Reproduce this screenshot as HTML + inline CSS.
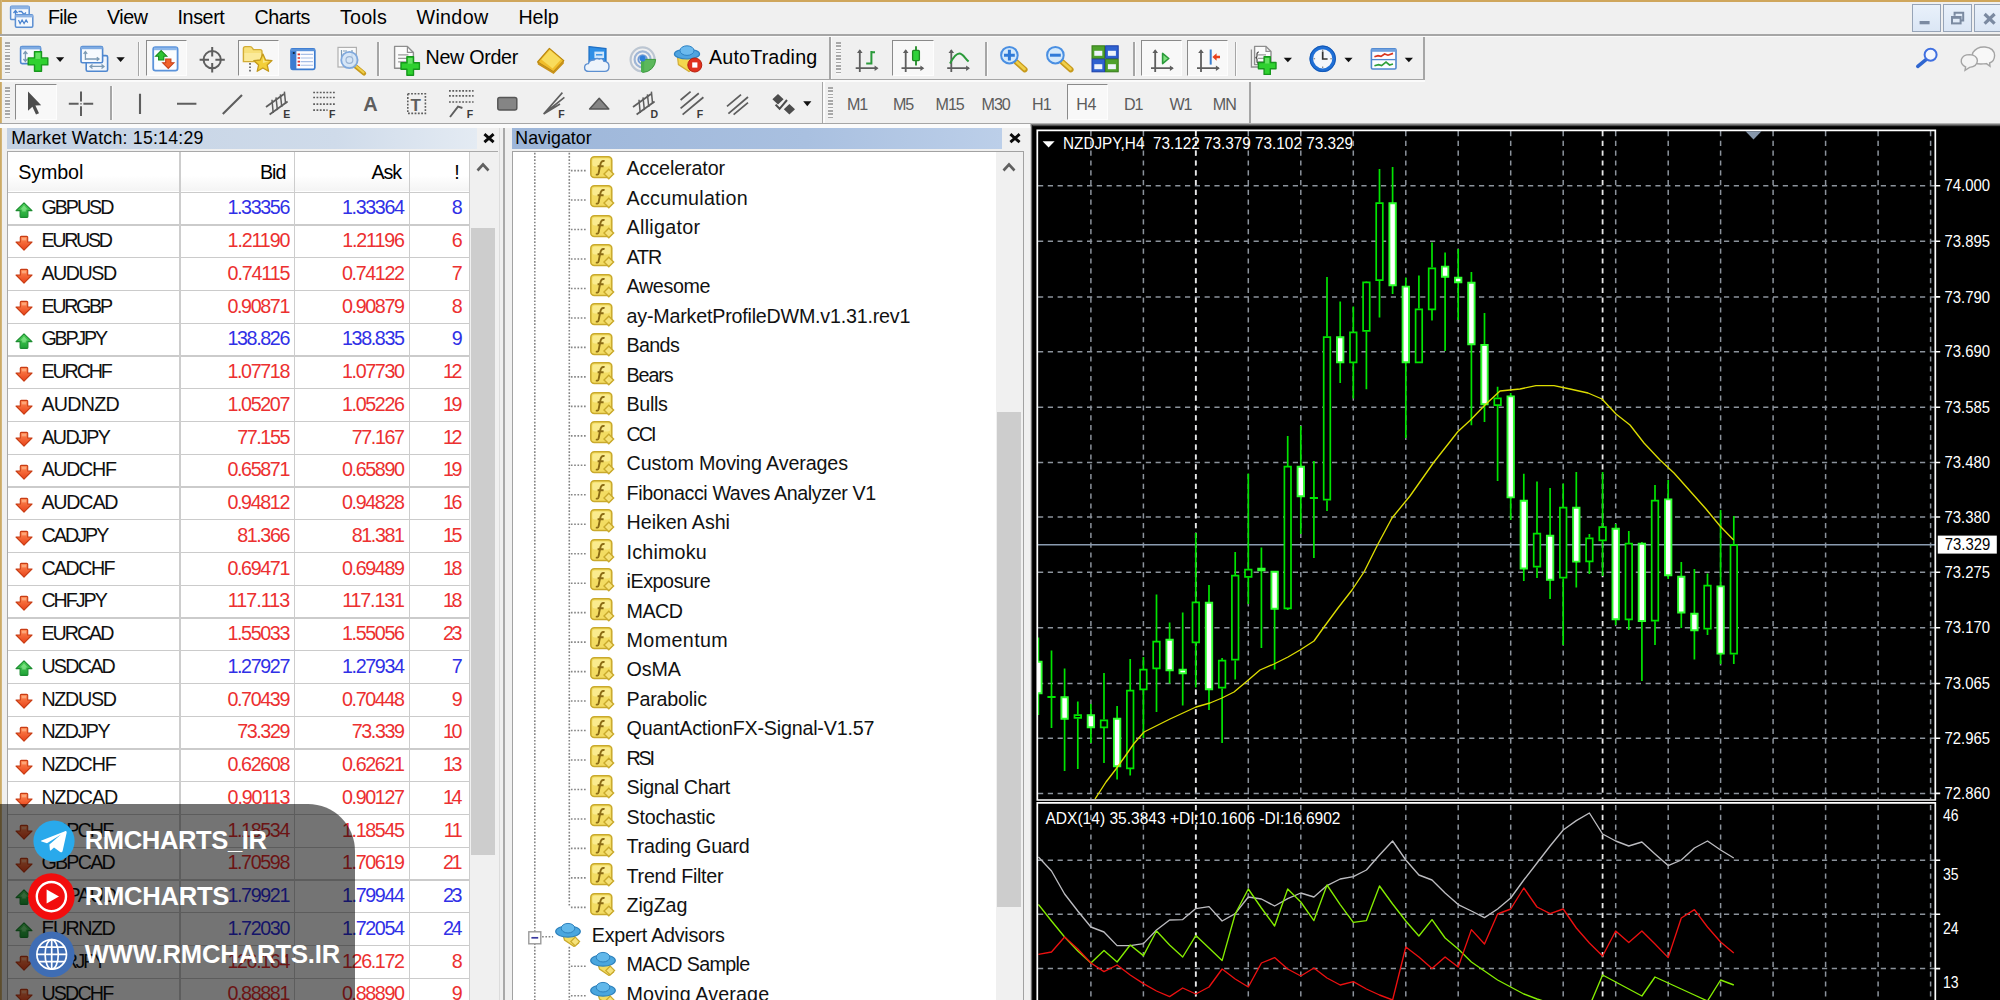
<!DOCTYPE html><html><head><meta charset="utf-8"><title>MetaTrader</title><style>
html,body{margin:0;padding:0}
body{width:2000px;height:1000px;overflow:hidden;position:relative;background:#f0f0f0;font-family:"Liberation Sans",sans-serif}
.t{position:absolute;white-space:pre;display:block}
.a{position:absolute}

.ln{position:absolute;background:#a6a6a6}
.wl{position:absolute;background:#fbfbfb}
.pb{position:absolute;background:#f8f8f8;border-top:1.5px solid #8a8a8a;border-left:1.5px solid #8a8a8a;border-right:1.5px solid #fdfdfd;border-bottom:1.5px solid #fdfdfd;box-sizing:border-box}
.grip{position:absolute;width:5px;background:repeating-linear-gradient(to bottom,#a8a8a8 0,#a8a8a8 1.6px,#f6f6f6 1.6px,#f6f6f6 3.28px)}
.mw{position:absolute;left:7px;top:151px;width:491px;height:860px;background:#fff;border:1px solid #a9a9a9;box-sizing:border-box}
.hl{position:absolute;left:0;height:1.3px;background:#cbcbcb}
.vl{position:absolute;width:1.3px;background:#cdcdcd}
</style></head><body>
<div class="a" style="left:0px;top:0px;width:2000px;height:1.8px;background:#cfa65c"></div>
<div class="a" style="left:0px;top:0px;width:1.7px;height:1000px;background:linear-gradient(to right,#c9a55c,#d6bb84)"></div>
<div class="ln" style="left:0px;top:34.4px;width:2000px;height:1.4px;"></div>
<div class="wl" style="left:0px;top:35.8px;width:2000px;height:1.6px;"></div>
<span class="t" style="left:48px;top:4.27px;font-size:19.7px;line-height:26px;color:#000;letter-spacing:-0.69px;">File</span>
<span class="t" style="left:107px;top:4.27px;font-size:19.7px;line-height:26px;color:#000;letter-spacing:-0.46px;">View</span>
<span class="t" style="left:177.5px;top:4.27px;font-size:19.7px;line-height:26px;color:#000;letter-spacing:-0.38px;">Insert</span>
<span class="t" style="left:254.5px;top:4.27px;font-size:19.7px;line-height:26px;color:#000;letter-spacing:-0.42px;">Charts</span>
<span class="t" style="left:340px;top:4.27px;font-size:19.7px;line-height:26px;color:#000;letter-spacing:0.2px;">Tools</span>
<span class="t" style="left:416.5px;top:4.27px;font-size:19.7px;line-height:26px;color:#000;letter-spacing:0.32px;">Window</span>
<span class="t" style="left:518.5px;top:4.27px;font-size:19.7px;line-height:26px;color:#000;letter-spacing:-0.13px;">Help</span>

<div class="a" style="left:1912px;top:4px;width:28.5px;height:28px;background:linear-gradient(#e9f1fb,#dbe6f5);border:1.4px solid #97a4b7;box-sizing:border-box"></div>
<div class="a" style="left:1943px;top:4px;width:29px;height:28px;background:linear-gradient(#e9f1fb,#dbe6f5);border:1.4px solid #97a4b7;box-sizing:border-box"></div>
<div class="a" style="left:1974.3px;top:4px;width:27px;height:28px;background:linear-gradient(#e9f1fb,#dbe6f5);border:1.4px solid #97a4b7;box-sizing:border-box"></div>

<div class="ln" style="left:0px;top:79px;width:1424.5px;height:1.3px;"></div>
<div class="wl" style="left:0px;top:80.3px;width:1424.5px;height:1.7px;"></div>
<div class="ln" style="left:1423.3px;top:37px;width:1.5px;height:43px;"></div>
<div class="ln" style="left:829.3px;top:37px;width:1.5px;height:42px;"></div>
<div class="wl" style="left:830.8px;top:37px;width:1.5px;height:42px;"></div>
<div class="grip" style="left:5.4px;top:42px;width:5px;height:33px;"></div>
<div class="grip" style="left:836px;top:42px;width:5px;height:33px;"></div>
<div class="ln" style="left:137.6px;top:41.5px;width:1.5px;height:34px;"></div>
<div class="wl" style="left:139.1px;top:41.5px;width:1.4px;height:34px;"></div>
<div class="ln" style="left:377.2px;top:41.5px;width:1.5px;height:34px;"></div>
<div class="wl" style="left:378.7px;top:41.5px;width:1.4px;height:34px;"></div>
<div class="ln" style="left:985.2px;top:41.5px;width:1.5px;height:34px;"></div>
<div class="wl" style="left:986.7px;top:41.5px;width:1.4px;height:34px;"></div>
<div class="ln" style="left:1133.2px;top:41.5px;width:1.5px;height:34px;"></div>
<div class="wl" style="left:1134.7px;top:41.5px;width:1.4px;height:34px;"></div>
<div class="ln" style="left:1234.6px;top:41.5px;width:1.5px;height:34px;"></div>
<div class="wl" style="left:1236.1px;top:41.5px;width:1.4px;height:34px;"></div>
<div class="pb" style="left:146px;top:40px;width:41px;height:35.5px;"></div>
<div class="pb" style="left:238.2px;top:40px;width:40.6px;height:35.5px;"></div>
<div class="pb" style="left:892px;top:40px;width:42px;height:35.5px;"></div>
<div class="pb" style="left:1141px;top:40px;width:41px;height:35.5px;"></div>
<div class="pb" style="left:1187.2px;top:40px;width:40.6px;height:35.5px;"></div>
<span class="t" style="left:425.5px;top:43.57px;font-size:19.7px;line-height:26px;color:#000;letter-spacing:-0.3px;">New Order</span>
<span class="t" style="left:709px;top:43.57px;font-size:19.7px;line-height:26px;color:#000;letter-spacing:0.17px;">AutoTrading</span>
<div class="ln" style="left:0px;top:122.8px;width:1030.5px;height:1.3px;"></div>
<div class="wl" style="left:0px;top:124.1px;width:1030.5px;height:3.6px;"></div>
<div class="a" style="left:1030.5px;top:122.6px;width:970px;height:1.6px;background:#bdbdbd"></div>
<div class="ln" style="left:1249px;top:82px;width:1.6px;height:41px;"></div>
<div class="ln" style="left:821.5px;top:82px;width:1.5px;height:41px;"></div>
<div class="wl" style="left:823px;top:82px;width:1.5px;height:41px;"></div>
<div class="grip" style="left:5.4px;top:87px;width:5px;height:31px;"></div>
<div class="grip" style="left:828px;top:87px;width:5px;height:31px;"></div>
<div class="ln" style="left:110px;top:85.5px;width:1.5px;height:34px;"></div>
<div class="wl" style="left:111.5px;top:85.5px;width:1.4px;height:34px;"></div>
<div class="pb" style="left:15px;top:84px;width:41.5px;height:35.5px;"></div>
<div class="pb" style="left:1067px;top:84px;width:41px;height:35.5px;"></div>
<span class="t" style="left:847px;top:93.52px;font-size:16.1px;line-height:21px;color:#5c5c5c;letter-spacing:-1.18px;">M1</span>
<span class="t" style="left:893px;top:93.52px;font-size:16.1px;line-height:21px;color:#5c5c5c;letter-spacing:-1.18px;">M5</span>
<span class="t" style="left:935.6px;top:93.52px;font-size:16.1px;line-height:21px;color:#5c5c5c;letter-spacing:-1.07px;">M15</span>
<span class="t" style="left:981.6px;top:93.52px;font-size:16.1px;line-height:21px;color:#5c5c5c;letter-spacing:-1.07px;">M30</span>
<span class="t" style="left:1032px;top:93.52px;font-size:16.1px;line-height:21px;color:#5c5c5c;letter-spacing:-0.99px;">H1</span>
<span class="t" style="left:1076.3px;top:93.52px;font-size:16.1px;line-height:21px;color:#5c5c5c;letter-spacing:-0.44px;">H4</span>
<span class="t" style="left:1124px;top:93.52px;font-size:16.1px;line-height:21px;color:#5c5c5c;letter-spacing:-1.04px;">D1</span>
<span class="t" style="left:1169.4px;top:93.52px;font-size:16.1px;line-height:21px;color:#5c5c5c;letter-spacing:-1.12px;">W1</span>
<span class="t" style="left:1212.7px;top:93.52px;font-size:16.1px;line-height:21px;color:#5c5c5c;letter-spacing:-0.82px;">MN</span>
<svg class="a" style="left:0;top:0" width="2000" height="125" viewBox="0 0 2000 125"><rect x="10.6" y="6.2" width="18.6" height="13.4" rx="1.2" fill="#f4f8fd" stroke="#5b8fd2" stroke-width="1.5"/><rect x="10.6" y="6.2" width="18.6" height="3" fill="#8fb4e4"/><path d="M13.5 13 l2 -2.5 l2 2.5 m-2 -2.5 v5 M18.5 11.5 h3 l2.5 3 l2 -2" stroke="#4a84d0" stroke-width="1.3" fill="none"/><rect x="15.4" y="14.8" width="17.4" height="12.4" rx="1.2" fill="#f4f8fd" stroke="#5b8fd2" stroke-width="1.5"/><rect x="15.4" y="14.8" width="17.4" height="2.6" fill="#8fb4e4"/><path d="M18.5 20 l1.6 3.6 l2 -3.6 l2 3.6 l2 -3.6 l1.6 2.6" stroke="#4a84d0" stroke-width="1.2" fill="none"/><rect x="1919.6" y="21" width="10" height="3.3" fill="#7b8aa1"/><path d="M1954.6 15.8 V12.7 H1963.2 V20.6 H1960.6" stroke="#7b8aa1" stroke-width="2" fill="none"/><rect x="1952" y="17" width="8.6" height="6.4" fill="none" stroke="#7b8aa1" stroke-width="2"/><rect x="1952" y="16.4" width="8.6" height="2.4" fill="#7b8aa1"/><path d="M1984.6 14 L1994.6 23.6 M1994.6 14 L1984.6 23.6" stroke="#7b8aa1" stroke-width="3.2" fill="none"/><rect x="20.6" y="46.6" width="20" height="17" rx="1.5" fill="#f7fafe" stroke="#4f87cf" stroke-width="1.6"/><rect x="20.6" y="46.6" width="20" height="2.8" fill="#7fabe2"/><path d="M25.4 52 V61 M23.4 54 L25.4 51.6 L27.4 54 M23.4 59 L25.4 61.4 L27.4 59" stroke="#7d9bb5" stroke-width="1.3" fill="none"/><path d="M34.5 51.6 H41.5 V57.9 H47.8 V64.9 H41.5 V71.2 H34.5 V64.9 H28.2 V57.9 H34.5 Z" fill="#2fd12f" stroke="#17971d" stroke-width="1.4" stroke-linejoin="round"/><path d="M35.5 52.8 H40.5 V58.9 H35.5 Z" fill="#8ef08a" opacity=".55"/><path d="M56 57.2 H64.2 L60.1 62 Z" fill="#111"/><rect x="86.2" y="55.6" width="21.4" height="15.6" rx="1.5" fill="#f2f6fc" stroke="#4f87cf" stroke-width="1.6"/><path d="M90 66.4 H104 M92.5 64.4 L90 66.4 L92.5 68.4 M101.5 64.4 L104 66.4 L101.5 68.4" stroke="#7d9bb5" stroke-width="1.3" fill="none"/><rect x="81" y="46.6" width="21.6" height="16.2" rx="1.5" fill="#f7fafe" stroke="#4f87cf" stroke-width="1.6"/><rect x="81" y="46.6" width="21.6" height="2.6" fill="#7fabe2"/><path d="M85.4 52 V60 M83.6 53.8 L85.4 51.6 L87.2 53.8 M86 59 H99 M96.8 57.2 L99 59 L96.8 60.8" stroke="#7d9bb5" stroke-width="1.3" fill="none"/><path d="M116.4 57.2 H124.8 L120.6 62 Z" fill="#111"/><rect x="153.2" y="47.2" width="24.4" height="23.4" rx="2.4" fill="#fbfdff" stroke="#5b93da" stroke-width="1.8"/><rect x="154" y="47.6" width="22.8" height="2.6" fill="#8db7ea"/><path d="M161.2 50.6 L166.8 56.2 H163.8 V60 H158.6 V56.2 H155.6 Z" fill="#2fc432" stroke="#188a1c" stroke-width="1.1"/><path d="M168.3 68.4 L173.9 62.8 H170.9 V59 H165.7 V62.8 H162.7 Z" fill="#f2642c" stroke="#c8421a" stroke-width="1.1"/><circle cx="212.2" cy="59.7" r="8.6" fill="none" stroke="#5e5e5e" stroke-width="2"/><path d="M212.2 47 V56.4 M212.2 63 V72.4 M199.6 59.7 H209 M215.4 59.7 H224.8" stroke="#5e5e5e" stroke-width="2" fill="none"/><path d="M243.4 61.6 V48.6 Q243.4 46.6 245.4 46.6 H250 Q251.6 46.6 252.4 48 L253.4 49.6 H260 Q262 49.6 262 51.6 V61.6 Z" fill="#f7e07a" stroke="#d2ac36" stroke-width="1.4"/><path d="M244.4 53 H261 V61 H244.4 Z" fill="#fbea9a"/><path d="M250 63 V72" stroke="#555" stroke-width="1.6" stroke-dasharray="1.7 1.7"/><path d="M262.9 54 L265.6 60 L272 60.6 L267.2 64.9 L268.6 71.3 L262.9 68 L257.2 71.3 L258.6 64.9 L253.8 60.6 L260.2 60 Z" fill="#f3cf38" stroke="#c49a1c" stroke-width="1.3" stroke-linejoin="round"/><path d="M262.9 57 L264.6 61 L268.6 61.4 L262.9 63 Z" fill="#fbee9a" opacity=".8"/><rect x="291" y="48.8" width="23.8" height="20.6" rx="1.6" fill="#fdfdff" stroke="#3b7bd0" stroke-width="1.7"/><rect x="291" y="48.8" width="5.4" height="20.6" fill="#3b7bd0"/><rect x="291" y="48.8" width="23.8" height="2.4" fill="#5b93da"/><path d="M300.6 54.4 H313 M300.6 58 H313 M300.6 61.6 H313 M300.6 65.2 H313" stroke="#a8bfe6" stroke-width="1.1"/><path d="M297.6 54.4 H300 M297.6 58 H300 M297.6 61.6 H300 M297.6 65.2 H300" stroke="#e0322c" stroke-width="1.7"/><circle cx="293.8" cy="53" r="1.1" fill="#123"/><rect x="338" y="47.4" width="18.4" height="19.6" fill="#fafafa" stroke="#b0b0b0" stroke-width="1.2"/><path d="M341.5 50 V58 M343 51 l4 0 M352 50 V57" stroke="#7d9bb5" stroke-width="1.2"/><path d="M355.4 66.2 L364 73.4" stroke="#c79a1c" stroke-width="4.4" stroke-linecap="round"/><path d="M355.8 66 L363.6 72.6" stroke="#f0cf4a" stroke-width="2" stroke-linecap="round"/><circle cx="349.4" cy="60" r="8.2" fill="#cfe2f6" fill-opacity=".85" stroke="#7fa8dc" stroke-width="1.8"/><circle cx="349.4" cy="60" r="3.4" fill="none" stroke="#9ab4d4" stroke-width="1.2"/><path d="M394.6 46.4 H407.4 L413.4 52.4 V68.2 H394.6 Z" fill="#fbfbfb" stroke="#8e8e8e" stroke-width="1.4" stroke-linejoin="round"/><path d="M407.4 46.4 V52.4 H413.4" fill="none" stroke="#8e8e8e" stroke-width="1.2"/><path d="M398.1 54.9 H408.4 M398.1 58.4 H408.4 M398.1 61.9 H406.4" stroke="#9a9a9a" stroke-width="1.4"/><path d="M406.9 56.8 H413.5 V62.7 H419.4 V69.3 H413.5 V75.2 H406.9 V69.3 H401 V62.7 H406.9 Z" fill="#2fd12f" stroke="#17971d" stroke-width="1.4" stroke-linejoin="round"/><path d="M407.9 58 H412.5 V63.7 H407.9 Z" fill="#8ef08a" opacity=".55"/><path d="M537.6 62 L549.4 48.4 L563.8 60.6 L553.4 71.8 Z" fill="#f0bd2a" stroke="#b8860e" stroke-width="1.2" stroke-linejoin="round"/><path d="M541.4 59.6 L549.8 50 L561 59.4 L552.6 68.4 Z" fill="#f8dc5c"/><path d="M537.6 62 L553.4 71.8 L563.8 60.6 L563.8 63.4 L553.6 74 L537.8 64.6 Z" fill="#c8921a"/><path d="M589 46.6 L606 48.6 V62 H589 Z" fill="#2f8fe6" stroke="#1f6fc4" stroke-width="1.2"/><rect x="594.4" y="51.6" width="9.6" height="6.4" fill="#cfe6fb"/><path d="M596 54.8 H602.4" stroke="#2f8fe6" stroke-width="1.4"/><path d="M589 71.4 Q584.6 71.4 584.6 67.4 Q584.6 64 588.4 63.6 Q589.6 59.6 594 60 Q596 57.6 599.4 59 Q602.6 57.6 604 61.4 Q609 61.6 609 66.4 Q609 71.4 604.6 71.4 Z" fill="#eef4fb" stroke="#5c8fd0" stroke-width="1.4"/><g fill="none"><circle cx="642.6" cy="59.4" r="12" stroke="#bcc6d2" stroke-width="2.2"/><circle cx="642.6" cy="59.4" r="8" stroke="#9fb6d6" stroke-width="2.2"/><circle cx="642.6" cy="59.4" r="4.2" stroke="#6f9ad6" stroke-width="2"/></g><path d="M642.6 59.4 L655.6 59.4 A13 13 0 0 1 642.6 72.4 Z" fill="#5cb85c" stroke="#3c9a3c" stroke-width="1"/><path d="M641 60 H644.2 V72 H641 Z" fill="#4caf50"/><circle cx="642.6" cy="58.6" r="3" fill="#2f7fd8"/><path d="M677.6 57.4 L694 57.4 L697.6 66 L689 71.6 L678.4 64.6 Z" fill="#f4d84e" stroke="#d2ac36" stroke-width="1.2"/><ellipse cx="687" cy="54" rx="12.6" ry="5" fill="#4fa4e0" stroke="#2f82c4" stroke-width="1.2"/><ellipse cx="687" cy="50.6" rx="7" ry="4.8" fill="#6cbaee" stroke="#2f82c4" stroke-width="1"/><circle cx="694.8" cy="65" r="7" fill="#e0301c" stroke="#b8200f" stroke-width="1"/><rect x="692.2" y="62.4" width="5.2" height="5.2" fill="#fff"/><path d="M859.8 50.5 V72 M855.7 68.2 H877.2" stroke="#5e5e5e" stroke-width="1.8" fill="none"/><path d="M857 53.1 L859.8 49.2 L862.6 53.1 Z M874.6 65.4 L878.5 68.2 L874.6 71 Z" fill="#5e5e5e"/><path d="M871.4 51 V64.6 M871.4 52.2 H875 M866.2 63.4 H871.4" stroke="#2a9a3a" stroke-width="2" fill="none"/><path d="M905.7 50.5 V72 M901.5 68.2 H923" stroke="#5e5e5e" stroke-width="1.8" fill="none"/><path d="M902.9 53.1 L905.7 49.2 L908.5 53.1 Z M920.4 65.4 L924.3 68.2 L920.4 71 Z" fill="#5e5e5e"/><path d="M916 46.2 V65.4" stroke="#1f8a24" stroke-width="1.8"/><rect x="912.6" y="50.4" width="6.8" height="10.2" rx="1" fill="#2fd23a" stroke="#1f8a24" stroke-width="1.3"/><path d="M951.3 50.5 V72 M947.2 68.2 H968.7" stroke="#5e5e5e" stroke-width="1.8" fill="none"/><path d="M948.5 53.1 L951.3 49.2 L954.1 53.1 Z M966.1 65.4 L970 68.2 L966.1 71 Z" fill="#5e5e5e"/><path d="M950 63.4 C953 58 956 53.6 959.4 53.6 C963 53.6 965 58.6 968.6 61.6" stroke="#2a9a3a" stroke-width="2" fill="none"/><path d="M1016.38 62.18 L1024.8 69.6" stroke="#c79a1c" stroke-width="5.6" stroke-linecap="round"/><path d="M1016.88 62.18 L1024.4 69" stroke="#f0cf4a" stroke-width="2.8" stroke-linecap="round"/><circle cx="1009.4" cy="55.2" r="8.3" fill="#d4e9fb" stroke="#4a8fe2" stroke-width="2"/><path d="M1004 55.2 H1014.8 M1009.4 49.8 V60.6" stroke="#2f7ad8" stroke-width="3" fill="none"/><path d="M1062.38 62.18 L1070.8 69.6" stroke="#c79a1c" stroke-width="5.6" stroke-linecap="round"/><path d="M1062.88 62.18 L1070.4 69" stroke="#f0cf4a" stroke-width="2.8" stroke-linecap="round"/><circle cx="1055.4" cy="55.2" r="8.3" fill="#d4e9fb" stroke="#4a8fe2" stroke-width="2"/><path d="M1050 55.2 H1060.8" stroke="#2f7ad8" stroke-width="3" fill="none"/><rect x="1092" y="45.8" width="12.6" height="12.6" fill="#4ea22c" stroke="#347a18" stroke-width="1"/><rect x="1094.3" y="50.8" width="8" height="5" fill="#eef4fb"/><rect x="1105.6" y="45.8" width="12.6" height="12.6" fill="#2f62d0" stroke="#1c3fa8" stroke-width="1"/><rect x="1107.9" y="50.8" width="8" height="5" fill="#eef4fb"/><rect x="1092" y="59.2" width="12.6" height="12.6" fill="#2f62d0" stroke="#1c3fa8" stroke-width="1"/><rect x="1094.3" y="64.2" width="8" height="5" fill="#eef4fb"/><rect x="1105.6" y="59.2" width="12.6" height="12.6" fill="#4ea22c" stroke="#347a18" stroke-width="1"/><rect x="1107.9" y="64.2" width="8" height="5" fill="#eef4fb"/><path d="M1155.2 50.5 V72 M1151 68.2 H1172.5" stroke="#5e5e5e" stroke-width="1.8" fill="none"/><path d="M1152.4 53.1 L1155.2 49.2 L1158 53.1 Z M1169.9 65.4 L1173.8 68.2 L1169.9 71 Z" fill="#5e5e5e"/><path d="M1162.6 53.4 V63.6 L1168.8 58.5 Z" fill="#7fe07f" stroke="#2a9a3a" stroke-width="1.6" stroke-linejoin="round"/><path d="M1201 50.5 V72 M1197 68.2 H1218.5" stroke="#5e5e5e" stroke-width="1.8" fill="none"/><path d="M1198.2 53.1 L1201 49.2 L1203.8 53.1 Z M1215.9 65.4 L1219.8 68.2 L1215.9 71 Z" fill="#5e5e5e"/><path d="M1210.7 49.5 V64.6" stroke="#3a7fd0" stroke-width="2"/><path d="M1212.4 57 L1216.6 53.2 V55.8 H1220 V58.2 H1216.6 V60.8 Z" fill="#e8401c"/><path d="M1254.6 46.4 H1266 L1271 51.4 V64.6 H1254.6 Z" fill="#fbfbfb" stroke="#8e8e8e" stroke-width="1.4" stroke-linejoin="round"/><path d="M1266 46.4 V51.4 H1271" fill="none" stroke="#8e8e8e" stroke-width="1.2"/><path d="M1258.1 54.9 H1266 M1258.1 58.4 H1266 M1258.1 61.9 H1264" stroke="#9a9a9a" stroke-width="1.4"/><path d="M1251.4 49.6 V67 H1264" fill="none" stroke="#8e8e8e" stroke-width="1.3"/><path d="M1259 52 q-2 0 -2 2 v2 q0 1.6 -1.6 1.6 q1.6 0 1.6 1.6 v2 q0 2 2 2" stroke="#444" stroke-width="1.2" fill="none"/><path d="M1264.1 56.8 H1270.3 V62.5 H1276 V68.7 H1270.3 V74.4 H1264.1 V68.7 H1258.4 V62.5 H1264.1 Z" fill="#2fd12f" stroke="#17971d" stroke-width="1.4" stroke-linejoin="round"/><path d="M1265.1 58 H1269.3 V63.5 H1265.1 Z" fill="#8ef08a" opacity=".55"/><path d="M1283.7 57.7 H1292 L1287.85 62.2 Z" fill="#111"/><circle cx="1322.7" cy="58.8" r="11.4" fill="#f4f6fa" stroke="#1f6fd6" stroke-width="3.6"/><circle cx="1322.7" cy="58.8" r="12.8" fill="none" stroke="#0f4fa8" stroke-width=".8"/><path d="M1322.7 51.4 V59 H1327.6" stroke="#333" stroke-width="1.7" fill="none"/><path d="M1322.7 49.6 v1.6 M1322.7 66.4 v1.6 M1313.5 58.8 h1.6 M1330.3 58.8 h1.6" stroke="#777" stroke-width="1.1"/><path d="M1344.4 57.7 H1352.6 L1348.5 62.2 Z" fill="#111"/><rect x="1371.4" y="48.8" width="24.6" height="20.2" rx="1.2" fill="#fdfdff" stroke="#4f87cf" stroke-width="1.6"/><rect x="1371.4" y="48.8" width="24.6" height="3" fill="#6fa0de"/><path d="M1372 59.6 H1395.6" stroke="#4f87cf" stroke-width="1.3"/><path d="M1374.4 56.8 L1378 55.6 L1381 56.4 L1384.6 54 L1388 55.2 L1393 53.4" stroke="#d8341c" stroke-width="1.7" fill="none"/><path d="M1374.4 65.8 L1378.6 64.6 L1381.6 65.6 L1386 62 L1389.6 65 L1393 64" stroke="#2fa03a" stroke-width="1.7" fill="none"/><path d="M1404.7 57.7 H1413 L1408.85 62.2 Z" fill="#111"/><path d="M1926 59.6 L1917.8 66.4" stroke="#2f66d0" stroke-width="3.6" stroke-linecap="round"/><circle cx="1930.6" cy="54.8" r="6" fill="#f4f7fd" stroke="#3f6fe0" stroke-width="2"/><path d="M1974.6 63.2 Q1970 59 1973 52.4 Q1977 46.4 1985 47 Q1994.4 48 1994.6 55.6 Q1994.4 61.6 1989.6 63 L1990 66.2 L1986.4 63.6 Q1979 64.6 1974.6 63.2 Z" fill="#f8f8f8" stroke="#a4a4a4" stroke-width="1.4"/><path d="M1965.6 67 Q1960.4 64.6 1961.4 59.4 Q1963 54.6 1969.6 54.6 Q1977 55 1977.4 60.6 Q1977.2 66.6 1969.6 67.4 L1965 70.4 Z" fill="#f4f4f4" stroke="#a4a4a4" stroke-width="1.4"/><path d="M28 91.6 V110.8 L32.4 106.8 L36 114.6 L39 113.2 L35.4 105.6 L41.2 105.2 Z" fill="#4c4c4c"/><path d="M81 91.6 V101.4 M81 106.2 V116 M68.8 103.8 H78.6 M83.4 103.8 H93.2" stroke="#5e5e5e" stroke-width="2" fill="none"/><rect x="80.3" y="103.1" width="1.4" height="1.4" fill="#5e5e5e"/><path d="M140 93.7 V114 M177 103.8 H196.4 M222.8 114 L242 95" stroke="#5e5e5e" stroke-width="2.1" fill="none"/><path d="M266 107 L284 94 M269.6 114.4 L287.6 101.4" stroke="#5e5e5e" stroke-width="1.8" fill="none"/><path d="M272 99.8 L273.2 113 M276 97.4 L277.4 110.2 M280.4 94.4 L281.8 107 M284.4 91.6 L285.6 103.6" stroke="#5e5e5e" stroke-width="1.5"/><text x="283.2" y="117.6" font-family="'Liberation Sans',sans-serif" font-weight="bold" font-size="10.5" fill="#3a3a3a">E</text><path d="M313.2 92.5 H335 M313.2 97.5 H335 M313.2 104.2 H335 M313.2 110.2 H327.6" stroke="#5e5e5e" stroke-width="1.7" stroke-dasharray="1.8 1.5"/><text x="329" y="117.6" font-family="'Liberation Sans',sans-serif" font-weight="bold" font-size="10.5" fill="#3a3a3a">F</text><text x="363.2" y="111" font-family="'Liberation Sans',sans-serif" font-weight="bold" font-size="20" fill="#5e5e5e">A</text><rect x="407.8" y="93.8" width="17.6" height="19.6" fill="none" stroke="#5e5e5e" stroke-width="1.6" stroke-dasharray="1.8 1.5"/><text x="410.4" y="111" font-family="'Liberation Sans',sans-serif" font-weight="bold" font-size="17" fill="#5e5e5e">T</text><path d="M449 90.8 H473.6 M449 95.8 H473.6 M449 102 H473.6" stroke="#5e5e5e" stroke-width="1.7" stroke-dasharray="1.8 1.5"/><path d="M450 117 L458 106.6 L462.4 108" stroke="#5e5e5e" stroke-width="1.9" fill="none"/><text x="466.8" y="117.6" font-family="'Liberation Sans',sans-serif" font-weight="bold" font-size="10.5" fill="#3a3a3a">F</text><rect x="497.8" y="97.4" width="19" height="12.6" rx="2" fill="#858585" stroke="#565656" stroke-width="1.5"/><path d="M543.6 114 L562.4 92.6 M543.6 114 L564.4 97.4 M543.6 114 L560 104" stroke="#5e5e5e" stroke-width="1.6" fill="none"/><text x="558.2" y="117.6" font-family="'Liberation Sans',sans-serif" font-weight="bold" font-size="10.5" fill="#3a3a3a">F</text><path d="M589.6 109 L599.2 98.2 L608.8 109 Z" fill="#858585" stroke="#565656" stroke-width="1.5" stroke-linejoin="round"/><path d="M633 107 L651 94 M636.6 114.4 L654.6 101.4" stroke="#5e5e5e" stroke-width="1.8" fill="none"/><path d="M639 99.8 L640.2 113 M643 97.4 L644.4 110.2 M647.4 94.4 L648.8 107 M651.4 91.6 L652.6 103.6" stroke="#5e5e5e" stroke-width="1.5"/><text x="650.4" y="117.6" font-family="'Liberation Sans',sans-serif" font-weight="bold" font-size="10.5" fill="#3a3a3a">D</text><path d="M680.6 100 L690.6 91.6 M680.6 108.4 L698.8 93.2 M682.6 114.6 L703.4 97.2" stroke="#5e5e5e" stroke-width="1.8" fill="none"/><text x="696.8" y="117.6" font-family="'Liberation Sans',sans-serif" font-weight="bold" font-size="10.5" fill="#3a3a3a">F</text><path d="M727 106.4 L741 94.6 M728.4 113.6 L748 97 M733.6 114.6 L748 102.6" stroke="#5e5e5e" stroke-width="1.8" fill="none"/><path d="M778 94 L783.6 99.2 L778 104.4 L772.4 99.2 Z M789.4 104 L795 109.2 L789.4 114.4 L783.8 109.2 Z" fill="#4c4c4c"/><path d="M775.6 104.6 L779.6 108.8 L787 100" stroke="#4c4c4c" stroke-width="2" fill="none"/><path d="M803.2 101.2 H811.4 L807.3 106.2 Z" fill="#111"/></svg>
<div class="a" style="left:6.8px;top:128px;width:470px;height:21px;background:linear-gradient(to right,#c3d1e3,#cfdbea 70%,#e4ebf3)"></div>
<span class="t" style="left:11.2px;top:126.97px;font-size:17.7px;line-height:23px;color:#000;letter-spacing:0.24px;">Market Watch: 15:14:29</span>
<svg class="a" style="left:482.6px;top:132.2px" width="12" height="12" viewBox="0 0 12 12"><path d="M1.4 2.2 L10.6 10.2 M10.6 2.2 L1.4 10.2" stroke="#0a0a0a" stroke-width="2.9" fill="none"/></svg>
<div class="a" style="left:503.4px;top:128px;width:1.5px;height:872px;background:#a9a9a9"></div>
<div class="a" style="left:498.8px;top:128px;width:1.3px;height:872px;background:#dcdcdc"></div>
<div class="mw"><div class="a" style="left:0px;top:0px;width:462px;height:39.4px;background:linear-gradient(#fff,#fff 60%,#f4f4f4)"></div><div class="a" style="left:462.3px;top:0px;width:27.5px;height:850px;background:#f0f0f0"></div><div class="a" style="left:463.2px;top:75.8px;width:24px;height:627px;background:#cdcdcd"></div><svg class="a" style="left:467.6px;top:10.2px" width="14" height="10" viewBox="0 0 14 10"><path d="M1.5 8.5 L7 2.5 L12.5 8.5" stroke="#606060" stroke-width="2.6" fill="none"/></svg><div class="hl" style="top:39.7px;width:462px"></div><div class="hl" style="top:72.45px;width:462px"></div><div class="hl" style="top:105.2px;width:462px"></div><div class="hl" style="top:137.95px;width:462px"></div><div class="hl" style="top:170.7px;width:462px"></div><div class="hl" style="top:203.45px;width:462px"></div><div class="hl" style="top:236.2px;width:462px"></div><div class="hl" style="top:268.95px;width:462px"></div><div class="hl" style="top:301.7px;width:462px"></div><div class="hl" style="top:334.45px;width:462px"></div><div class="hl" style="top:367.2px;width:462px"></div><div class="hl" style="top:399.95px;width:462px"></div><div class="hl" style="top:432.7px;width:462px"></div><div class="hl" style="top:465.45px;width:462px"></div><div class="hl" style="top:498.2px;width:462px"></div><div class="hl" style="top:530.95px;width:462px"></div><div class="hl" style="top:563.7px;width:462px"></div><div class="hl" style="top:596.45px;width:462px"></div><div class="hl" style="top:629.2px;width:462px"></div><div class="hl" style="top:661.95px;width:462px"></div><div class="hl" style="top:694.7px;width:462px"></div><div class="hl" style="top:727.45px;width:462px"></div><div class="hl" style="top:760.2px;width:462px"></div><div class="hl" style="top:792.95px;width:462px"></div><div class="hl" style="top:825.7px;width:462px"></div><div class="hl" style="top:858.45px;width:462px"></div><div class="hl" style="top:891.2px;width:462px"></div><div class="vl" style="left:171.3px;top:0px;height:850px"></div><div class="vl" style="left:285.8px;top:0px;height:850px"></div><div class="vl" style="left:400.8px;top:0px;height:850px"></div><div class="vl" style="left:461px;top:0px;height:850px"></div><span class="t" style="left:10.2px;top:6.77px;font-size:19.7px;line-height:26px;color:#000;letter-spacing:-0.11px;">Symbol</span><span class="t" style="left:251.91px;top:6.77px;font-size:19.7px;line-height:26px;color:#000;letter-spacing:-0.99px;">Bid</span><span class="t" style="left:363.39px;top:6.77px;font-size:19.7px;line-height:26px;color:#000;letter-spacing:-1.11px;">Ask</span><span class="t" style="left:446.3px;top:6.77px;font-size:19.7px;line-height:26px;color:#000;">!</span><span class="t" style="left:33.4px;top:42.27px;font-size:19.7px;line-height:26px;color:#111;letter-spacing:-2.02px;">GBPUSD</span><span class="t" style="left:219.38px;top:42.27px;font-size:19.7px;line-height:26px;color:#3030e6;letter-spacing:-1.36px;">1.33356</span><span class="t" style="left:333.98px;top:42.27px;font-size:19.7px;line-height:26px;color:#3030e6;letter-spacing:-1.36px;">1.33364</span><span class="t" style="left:443.64px;top:42.27px;font-size:19.7px;line-height:26px;color:#3030e6;">8</span><svg class="a" style="left:7.4px;top:49.5px" width="18" height="17" viewBox="0 0 18 17"><defs><linearGradient id="gu" x1="0" y1="0" x2="0" y2="1"><stop offset="0" stop-color="#52d45c"/><stop offset="1" stop-color="#1fa236"/></linearGradient></defs><path d="M9 0.8 L17 8.6 H12.9 V14.6 Q12.9 15.4 12.1 15.4 H5.9 Q5.1 15.4 5.1 14.6 V8.6 H1 Z" fill="url(#gu)" stroke="#1c8c30" stroke-width="1.1" stroke-linejoin="round"/><path d="M9 3.6 L12.6 7.4 H10.8 V9.6 H7.2 V7.4 H5.4 Z" fill="#9df09f" opacity=".6"/></svg><span class="t" style="left:33.4px;top:75.02px;font-size:19.7px;line-height:26px;color:#111;letter-spacing:-2.29px;">EURUSD</span><span class="t" style="left:219.59px;top:75.02px;font-size:19.7px;line-height:26px;color:#ec3030;letter-spacing:-1.15px;">1.21190</span><span class="t" style="left:334.19px;top:75.02px;font-size:19.7px;line-height:26px;color:#ec3030;letter-spacing:-1.15px;">1.21196</span><span class="t" style="left:443.64px;top:75.02px;font-size:19.7px;line-height:26px;color:#ec3030;">6</span><svg class="a" style="left:7.4px;top:82.85px" width="18" height="17" viewBox="0 0 18 17"><defs><linearGradient id="gd" x1="0" y1="0" x2="0" y2="1"><stop offset="0" stop-color="#ff8a52"/><stop offset="1" stop-color="#e8421a"/></linearGradient></defs><path d="M9 15.2 L17 7 H12.7 V2.4 Q12.7 1.4 11.7 1.4 H6.3 Q5.3 1.4 5.3 2.4 V7 H1 Z" fill="url(#gd)" stroke="#c83c14" stroke-width="1.1" stroke-linejoin="round"/><path d="M6.8 2.8 H11.2 V5.4 H6.8Z" fill="#ffc09a" opacity=".6"/></svg><span class="t" style="left:33.4px;top:107.77px;font-size:19.7px;line-height:26px;color:#111;letter-spacing:-1.47px;">AUDUSD</span><span class="t" style="left:219.59px;top:107.77px;font-size:19.7px;line-height:26px;color:#ec3030;letter-spacing:-1.15px;">0.74115</span><span class="t" style="left:333.98px;top:107.77px;font-size:19.7px;line-height:26px;color:#ec3030;letter-spacing:-1.36px;">0.74122</span><span class="t" style="left:443.64px;top:107.77px;font-size:19.7px;line-height:26px;color:#ec3030;">7</span><svg class="a" style="left:7.4px;top:115.6px" width="18" height="17" viewBox="0 0 18 17"><defs><linearGradient id="gd" x1="0" y1="0" x2="0" y2="1"><stop offset="0" stop-color="#ff8a52"/><stop offset="1" stop-color="#e8421a"/></linearGradient></defs><path d="M9 15.2 L17 7 H12.7 V2.4 Q12.7 1.4 11.7 1.4 H6.3 Q5.3 1.4 5.3 2.4 V7 H1 Z" fill="url(#gd)" stroke="#c83c14" stroke-width="1.1" stroke-linejoin="round"/><path d="M6.8 2.8 H11.2 V5.4 H6.8Z" fill="#ffc09a" opacity=".6"/></svg><span class="t" style="left:33.4px;top:140.52px;font-size:19.7px;line-height:26px;color:#111;letter-spacing:-2.3px;">EURGBP</span><span class="t" style="left:219.38px;top:140.52px;font-size:19.7px;line-height:26px;color:#ec3030;letter-spacing:-1.36px;">0.90871</span><span class="t" style="left:333.98px;top:140.52px;font-size:19.7px;line-height:26px;color:#ec3030;letter-spacing:-1.36px;">0.90879</span><span class="t" style="left:443.64px;top:140.52px;font-size:19.7px;line-height:26px;color:#ec3030;">8</span><svg class="a" style="left:7.4px;top:148.35px" width="18" height="17" viewBox="0 0 18 17"><defs><linearGradient id="gd" x1="0" y1="0" x2="0" y2="1"><stop offset="0" stop-color="#ff8a52"/><stop offset="1" stop-color="#e8421a"/></linearGradient></defs><path d="M9 15.2 L17 7 H12.7 V2.4 Q12.7 1.4 11.7 1.4 H6.3 Q5.3 1.4 5.3 2.4 V7 H1 Z" fill="url(#gd)" stroke="#c83c14" stroke-width="1.1" stroke-linejoin="round"/><path d="M6.8 2.8 H11.2 V5.4 H6.8Z" fill="#ffc09a" opacity=".6"/></svg><span class="t" style="left:33.4px;top:173.27px;font-size:19.7px;line-height:26px;color:#111;letter-spacing:-2.2px;">GBPJPY</span><span class="t" style="left:219.38px;top:173.27px;font-size:19.7px;line-height:26px;color:#3030e6;letter-spacing:-1.36px;">138.826</span><span class="t" style="left:333.98px;top:173.27px;font-size:19.7px;line-height:26px;color:#3030e6;letter-spacing:-1.36px;">138.835</span><span class="t" style="left:443.64px;top:173.27px;font-size:19.7px;line-height:26px;color:#3030e6;">9</span><svg class="a" style="left:7.4px;top:180.5px" width="18" height="17" viewBox="0 0 18 17"><defs><linearGradient id="gu" x1="0" y1="0" x2="0" y2="1"><stop offset="0" stop-color="#52d45c"/><stop offset="1" stop-color="#1fa236"/></linearGradient></defs><path d="M9 0.8 L17 8.6 H12.9 V14.6 Q12.9 15.4 12.1 15.4 H5.9 Q5.1 15.4 5.1 14.6 V8.6 H1 Z" fill="url(#gu)" stroke="#1c8c30" stroke-width="1.1" stroke-linejoin="round"/><path d="M9 3.6 L12.6 7.4 H10.8 V9.6 H7.2 V7.4 H5.4 Z" fill="#9df09f" opacity=".6"/></svg><span class="t" style="left:33.4px;top:206.02px;font-size:19.7px;line-height:26px;color:#111;letter-spacing:-2.11px;">EURCHF</span><span class="t" style="left:219.38px;top:206.02px;font-size:19.7px;line-height:26px;color:#ec3030;letter-spacing:-1.36px;">1.07718</span><span class="t" style="left:333.98px;top:206.02px;font-size:19.7px;line-height:26px;color:#ec3030;letter-spacing:-1.36px;">1.07730</span><span class="t" style="left:434.95px;top:206.02px;font-size:19.7px;line-height:26px;color:#ec3030;letter-spacing:-2.27px;">12</span><svg class="a" style="left:7.4px;top:213.85px" width="18" height="17" viewBox="0 0 18 17"><defs><linearGradient id="gd" x1="0" y1="0" x2="0" y2="1"><stop offset="0" stop-color="#ff8a52"/><stop offset="1" stop-color="#e8421a"/></linearGradient></defs><path d="M9 15.2 L17 7 H12.7 V2.4 Q12.7 1.4 11.7 1.4 H6.3 Q5.3 1.4 5.3 2.4 V7 H1 Z" fill="url(#gd)" stroke="#c83c14" stroke-width="1.1" stroke-linejoin="round"/><path d="M6.8 2.8 H11.2 V5.4 H6.8Z" fill="#ffc09a" opacity=".6"/></svg><span class="t" style="left:33.4px;top:238.77px;font-size:19.7px;line-height:26px;color:#111;letter-spacing:-0.74px;">AUDNZD</span><span class="t" style="left:219.38px;top:238.77px;font-size:19.7px;line-height:26px;color:#ec3030;letter-spacing:-1.36px;">1.05207</span><span class="t" style="left:333.98px;top:238.77px;font-size:19.7px;line-height:26px;color:#ec3030;letter-spacing:-1.36px;">1.05226</span><span class="t" style="left:434.95px;top:238.77px;font-size:19.7px;line-height:26px;color:#ec3030;letter-spacing:-2.27px;">19</span><svg class="a" style="left:7.4px;top:246.6px" width="18" height="17" viewBox="0 0 18 17"><defs><linearGradient id="gd" x1="0" y1="0" x2="0" y2="1"><stop offset="0" stop-color="#ff8a52"/><stop offset="1" stop-color="#e8421a"/></linearGradient></defs><path d="M9 15.2 L17 7 H12.7 V2.4 Q12.7 1.4 11.7 1.4 H6.3 Q5.3 1.4 5.3 2.4 V7 H1 Z" fill="url(#gd)" stroke="#c83c14" stroke-width="1.1" stroke-linejoin="round"/><path d="M6.8 2.8 H11.2 V5.4 H6.8Z" fill="#ffc09a" opacity=".6"/></svg><span class="t" style="left:33.4px;top:271.52px;font-size:19.7px;line-height:26px;color:#111;letter-spacing:-1.66px;">AUDJPY</span><span class="t" style="left:229.18px;top:271.52px;font-size:19.7px;line-height:26px;color:#ec3030;letter-spacing:-1.4px;">77.155</span><span class="t" style="left:343.78px;top:271.52px;font-size:19.7px;line-height:26px;color:#ec3030;letter-spacing:-1.4px;">77.167</span><span class="t" style="left:434.95px;top:271.52px;font-size:19.7px;line-height:26px;color:#ec3030;letter-spacing:-2.27px;">12</span><svg class="a" style="left:7.4px;top:279.35px" width="18" height="17" viewBox="0 0 18 17"><defs><linearGradient id="gd" x1="0" y1="0" x2="0" y2="1"><stop offset="0" stop-color="#ff8a52"/><stop offset="1" stop-color="#e8421a"/></linearGradient></defs><path d="M9 15.2 L17 7 H12.7 V2.4 Q12.7 1.4 11.7 1.4 H6.3 Q5.3 1.4 5.3 2.4 V7 H1 Z" fill="url(#gd)" stroke="#c83c14" stroke-width="1.1" stroke-linejoin="round"/><path d="M6.8 2.8 H11.2 V5.4 H6.8Z" fill="#ffc09a" opacity=".6"/></svg><span class="t" style="left:33.4px;top:304.27px;font-size:19.7px;line-height:26px;color:#111;letter-spacing:-1.29px;">AUDCHF</span><span class="t" style="left:219.38px;top:304.27px;font-size:19.7px;line-height:26px;color:#ec3030;letter-spacing:-1.36px;">0.65871</span><span class="t" style="left:333.98px;top:304.27px;font-size:19.7px;line-height:26px;color:#ec3030;letter-spacing:-1.36px;">0.65890</span><span class="t" style="left:434.95px;top:304.27px;font-size:19.7px;line-height:26px;color:#ec3030;letter-spacing:-2.27px;">19</span><svg class="a" style="left:7.4px;top:312.1px" width="18" height="17" viewBox="0 0 18 17"><defs><linearGradient id="gd" x1="0" y1="0" x2="0" y2="1"><stop offset="0" stop-color="#ff8a52"/><stop offset="1" stop-color="#e8421a"/></linearGradient></defs><path d="M9 15.2 L17 7 H12.7 V2.4 Q12.7 1.4 11.7 1.4 H6.3 Q5.3 1.4 5.3 2.4 V7 H1 Z" fill="url(#gd)" stroke="#c83c14" stroke-width="1.1" stroke-linejoin="round"/><path d="M6.8 2.8 H11.2 V5.4 H6.8Z" fill="#ffc09a" opacity=".6"/></svg><span class="t" style="left:33.4px;top:337.02px;font-size:19.7px;line-height:26px;color:#111;letter-spacing:-1.2px;">AUDCAD</span><span class="t" style="left:219.38px;top:337.02px;font-size:19.7px;line-height:26px;color:#ec3030;letter-spacing:-1.36px;">0.94812</span><span class="t" style="left:333.98px;top:337.02px;font-size:19.7px;line-height:26px;color:#ec3030;letter-spacing:-1.36px;">0.94828</span><span class="t" style="left:434.95px;top:337.02px;font-size:19.7px;line-height:26px;color:#ec3030;letter-spacing:-2.27px;">16</span><svg class="a" style="left:7.4px;top:344.85px" width="18" height="17" viewBox="0 0 18 17"><defs><linearGradient id="gd" x1="0" y1="0" x2="0" y2="1"><stop offset="0" stop-color="#ff8a52"/><stop offset="1" stop-color="#e8421a"/></linearGradient></defs><path d="M9 15.2 L17 7 H12.7 V2.4 Q12.7 1.4 11.7 1.4 H6.3 Q5.3 1.4 5.3 2.4 V7 H1 Z" fill="url(#gd)" stroke="#c83c14" stroke-width="1.1" stroke-linejoin="round"/><path d="M6.8 2.8 H11.2 V5.4 H6.8Z" fill="#ffc09a" opacity=".6"/></svg><span class="t" style="left:33.4px;top:369.77px;font-size:19.7px;line-height:26px;color:#111;letter-spacing:-1.93px;">CADJPY</span><span class="t" style="left:229.18px;top:369.77px;font-size:19.7px;line-height:26px;color:#ec3030;letter-spacing:-1.4px;">81.366</span><span class="t" style="left:343.78px;top:369.77px;font-size:19.7px;line-height:26px;color:#ec3030;letter-spacing:-1.4px;">81.381</span><span class="t" style="left:434.95px;top:369.77px;font-size:19.7px;line-height:26px;color:#ec3030;letter-spacing:-2.27px;">15</span><svg class="a" style="left:7.4px;top:377.6px" width="18" height="17" viewBox="0 0 18 17"><defs><linearGradient id="gd" x1="0" y1="0" x2="0" y2="1"><stop offset="0" stop-color="#ff8a52"/><stop offset="1" stop-color="#e8421a"/></linearGradient></defs><path d="M9 15.2 L17 7 H12.7 V2.4 Q12.7 1.4 11.7 1.4 H6.3 Q5.3 1.4 5.3 2.4 V7 H1 Z" fill="url(#gd)" stroke="#c83c14" stroke-width="1.1" stroke-linejoin="round"/><path d="M6.8 2.8 H11.2 V5.4 H6.8Z" fill="#ffc09a" opacity=".6"/></svg><span class="t" style="left:33.4px;top:402.52px;font-size:19.7px;line-height:26px;color:#111;letter-spacing:-1.56px;">CADCHF</span><span class="t" style="left:219.38px;top:402.52px;font-size:19.7px;line-height:26px;color:#ec3030;letter-spacing:-1.36px;">0.69471</span><span class="t" style="left:333.98px;top:402.52px;font-size:19.7px;line-height:26px;color:#ec3030;letter-spacing:-1.36px;">0.69489</span><span class="t" style="left:434.95px;top:402.52px;font-size:19.7px;line-height:26px;color:#ec3030;letter-spacing:-2.27px;">18</span><svg class="a" style="left:7.4px;top:410.35px" width="18" height="17" viewBox="0 0 18 17"><defs><linearGradient id="gd" x1="0" y1="0" x2="0" y2="1"><stop offset="0" stop-color="#ff8a52"/><stop offset="1" stop-color="#e8421a"/></linearGradient></defs><path d="M9 15.2 L17 7 H12.7 V2.4 Q12.7 1.4 11.7 1.4 H6.3 Q5.3 1.4 5.3 2.4 V7 H1 Z" fill="url(#gd)" stroke="#c83c14" stroke-width="1.1" stroke-linejoin="round"/><path d="M6.8 2.8 H11.2 V5.4 H6.8Z" fill="#ffc09a" opacity=".6"/></svg><span class="t" style="left:33.4px;top:435.27px;font-size:19.7px;line-height:26px;color:#111;letter-spacing:-2.02px;">CHFJPY</span><span class="t" style="left:219.79px;top:435.27px;font-size:19.7px;line-height:26px;color:#ec3030;letter-spacing:-0.95px;">117.113</span><span class="t" style="left:334.19px;top:435.27px;font-size:19.7px;line-height:26px;color:#ec3030;letter-spacing:-1.15px;">117.131</span><span class="t" style="left:434.95px;top:435.27px;font-size:19.7px;line-height:26px;color:#ec3030;letter-spacing:-2.27px;">18</span><svg class="a" style="left:7.4px;top:443.1px" width="18" height="17" viewBox="0 0 18 17"><defs><linearGradient id="gd" x1="0" y1="0" x2="0" y2="1"><stop offset="0" stop-color="#ff8a52"/><stop offset="1" stop-color="#e8421a"/></linearGradient></defs><path d="M9 15.2 L17 7 H12.7 V2.4 Q12.7 1.4 11.7 1.4 H6.3 Q5.3 1.4 5.3 2.4 V7 H1 Z" fill="url(#gd)" stroke="#c83c14" stroke-width="1.1" stroke-linejoin="round"/><path d="M6.8 2.8 H11.2 V5.4 H6.8Z" fill="#ffc09a" opacity=".6"/></svg><span class="t" style="left:33.4px;top:468.02px;font-size:19.7px;line-height:26px;color:#111;letter-spacing:-2.02px;">EURCAD</span><span class="t" style="left:219.38px;top:468.02px;font-size:19.7px;line-height:26px;color:#ec3030;letter-spacing:-1.36px;">1.55033</span><span class="t" style="left:333.98px;top:468.02px;font-size:19.7px;line-height:26px;color:#ec3030;letter-spacing:-1.36px;">1.55056</span><span class="t" style="left:434.95px;top:468.02px;font-size:19.7px;line-height:26px;color:#ec3030;letter-spacing:-2.27px;">23</span><svg class="a" style="left:7.4px;top:475.85px" width="18" height="17" viewBox="0 0 18 17"><defs><linearGradient id="gd" x1="0" y1="0" x2="0" y2="1"><stop offset="0" stop-color="#ff8a52"/><stop offset="1" stop-color="#e8421a"/></linearGradient></defs><path d="M9 15.2 L17 7 H12.7 V2.4 Q12.7 1.4 11.7 1.4 H6.3 Q5.3 1.4 5.3 2.4 V7 H1 Z" fill="url(#gd)" stroke="#c83c14" stroke-width="1.1" stroke-linejoin="round"/><path d="M6.8 2.8 H11.2 V5.4 H6.8Z" fill="#ffc09a" opacity=".6"/></svg><span class="t" style="left:33.4px;top:500.77px;font-size:19.7px;line-height:26px;color:#111;letter-spacing:-1.75px;">USDCAD</span><span class="t" style="left:219.38px;top:500.77px;font-size:19.7px;line-height:26px;color:#3030e6;letter-spacing:-1.36px;">1.27927</span><span class="t" style="left:333.98px;top:500.77px;font-size:19.7px;line-height:26px;color:#3030e6;letter-spacing:-1.36px;">1.27934</span><span class="t" style="left:443.64px;top:500.77px;font-size:19.7px;line-height:26px;color:#3030e6;">7</span><svg class="a" style="left:7.4px;top:508px" width="18" height="17" viewBox="0 0 18 17"><defs><linearGradient id="gu" x1="0" y1="0" x2="0" y2="1"><stop offset="0" stop-color="#52d45c"/><stop offset="1" stop-color="#1fa236"/></linearGradient></defs><path d="M9 0.8 L17 8.6 H12.9 V14.6 Q12.9 15.4 12.1 15.4 H5.9 Q5.1 15.4 5.1 14.6 V8.6 H1 Z" fill="url(#gu)" stroke="#1c8c30" stroke-width="1.1" stroke-linejoin="round"/><path d="M9 3.6 L12.6 7.4 H10.8 V9.6 H7.2 V7.4 H5.4 Z" fill="#9df09f" opacity=".6"/></svg><span class="t" style="left:33.4px;top:533.52px;font-size:19.7px;line-height:26px;color:#111;letter-spacing:-1.29px;">NZDUSD</span><span class="t" style="left:219.38px;top:533.52px;font-size:19.7px;line-height:26px;color:#ec3030;letter-spacing:-1.36px;">0.70439</span><span class="t" style="left:333.98px;top:533.52px;font-size:19.7px;line-height:26px;color:#ec3030;letter-spacing:-1.36px;">0.70448</span><span class="t" style="left:443.64px;top:533.52px;font-size:19.7px;line-height:26px;color:#ec3030;">9</span><svg class="a" style="left:7.4px;top:541.35px" width="18" height="17" viewBox="0 0 18 17"><defs><linearGradient id="gd" x1="0" y1="0" x2="0" y2="1"><stop offset="0" stop-color="#ff8a52"/><stop offset="1" stop-color="#e8421a"/></linearGradient></defs><path d="M9 15.2 L17 7 H12.7 V2.4 Q12.7 1.4 11.7 1.4 H6.3 Q5.3 1.4 5.3 2.4 V7 H1 Z" fill="url(#gd)" stroke="#c83c14" stroke-width="1.1" stroke-linejoin="round"/><path d="M6.8 2.8 H11.2 V5.4 H6.8Z" fill="#ffc09a" opacity=".6"/></svg><span class="t" style="left:33.4px;top:566.27px;font-size:19.7px;line-height:26px;color:#111;letter-spacing:-1.47px;">NZDJPY</span><span class="t" style="left:229.18px;top:566.27px;font-size:19.7px;line-height:26px;color:#ec3030;letter-spacing:-1.4px;">73.329</span><span class="t" style="left:343.78px;top:566.27px;font-size:19.7px;line-height:26px;color:#ec3030;letter-spacing:-1.4px;">73.339</span><span class="t" style="left:434.95px;top:566.27px;font-size:19.7px;line-height:26px;color:#ec3030;letter-spacing:-2.27px;">10</span><svg class="a" style="left:7.4px;top:574.1px" width="18" height="17" viewBox="0 0 18 17"><defs><linearGradient id="gd" x1="0" y1="0" x2="0" y2="1"><stop offset="0" stop-color="#ff8a52"/><stop offset="1" stop-color="#e8421a"/></linearGradient></defs><path d="M9 15.2 L17 7 H12.7 V2.4 Q12.7 1.4 11.7 1.4 H6.3 Q5.3 1.4 5.3 2.4 V7 H1 Z" fill="url(#gd)" stroke="#c83c14" stroke-width="1.1" stroke-linejoin="round"/><path d="M6.8 2.8 H11.2 V5.4 H6.8Z" fill="#ffc09a" opacity=".6"/></svg><span class="t" style="left:33.4px;top:599.02px;font-size:19.7px;line-height:26px;color:#111;letter-spacing:-1.11px;">NZDCHF</span><span class="t" style="left:219.38px;top:599.02px;font-size:19.7px;line-height:26px;color:#ec3030;letter-spacing:-1.36px;">0.62608</span><span class="t" style="left:333.98px;top:599.02px;font-size:19.7px;line-height:26px;color:#ec3030;letter-spacing:-1.36px;">0.62621</span><span class="t" style="left:434.95px;top:599.02px;font-size:19.7px;line-height:26px;color:#ec3030;letter-spacing:-2.27px;">13</span><svg class="a" style="left:7.4px;top:606.85px" width="18" height="17" viewBox="0 0 18 17"><defs><linearGradient id="gd" x1="0" y1="0" x2="0" y2="1"><stop offset="0" stop-color="#ff8a52"/><stop offset="1" stop-color="#e8421a"/></linearGradient></defs><path d="M9 15.2 L17 7 H12.7 V2.4 Q12.7 1.4 11.7 1.4 H6.3 Q5.3 1.4 5.3 2.4 V7 H1 Z" fill="url(#gd)" stroke="#c83c14" stroke-width="1.1" stroke-linejoin="round"/><path d="M6.8 2.8 H11.2 V5.4 H6.8Z" fill="#ffc09a" opacity=".6"/></svg><span class="t" style="left:33.4px;top:631.77px;font-size:19.7px;line-height:26px;color:#111;letter-spacing:-1.02px;">NZDCAD</span><span class="t" style="left:219.59px;top:631.77px;font-size:19.7px;line-height:26px;color:#ec3030;letter-spacing:-1.15px;">0.90113</span><span class="t" style="left:333.98px;top:631.77px;font-size:19.7px;line-height:26px;color:#ec3030;letter-spacing:-1.36px;">0.90127</span><span class="t" style="left:434.95px;top:631.77px;font-size:19.7px;line-height:26px;color:#ec3030;letter-spacing:-2.27px;">14</span><svg class="a" style="left:7.4px;top:639.6px" width="18" height="17" viewBox="0 0 18 17"><defs><linearGradient id="gd" x1="0" y1="0" x2="0" y2="1"><stop offset="0" stop-color="#ff8a52"/><stop offset="1" stop-color="#e8421a"/></linearGradient></defs><path d="M9 15.2 L17 7 H12.7 V2.4 Q12.7 1.4 11.7 1.4 H6.3 Q5.3 1.4 5.3 2.4 V7 H1 Z" fill="url(#gd)" stroke="#c83c14" stroke-width="1.1" stroke-linejoin="round"/><path d="M6.8 2.8 H11.2 V5.4 H6.8Z" fill="#ffc09a" opacity=".6"/></svg><span class="t" style="left:33.4px;top:664.52px;font-size:19.7px;line-height:26px;color:#111;letter-spacing:-1.84px;">GBPCHF</span><span class="t" style="left:219.38px;top:664.52px;font-size:19.7px;line-height:26px;color:#ec3030;letter-spacing:-1.36px;">1.18534</span><span class="t" style="left:333.98px;top:664.52px;font-size:19.7px;line-height:26px;color:#ec3030;letter-spacing:-1.36px;">1.18545</span><span class="t" style="left:435.69px;top:664.52px;font-size:19.7px;line-height:26px;color:#ec3030;letter-spacing:-1.53px;">11</span><svg class="a" style="left:7.4px;top:672.35px" width="18" height="17" viewBox="0 0 18 17"><defs><linearGradient id="gd" x1="0" y1="0" x2="0" y2="1"><stop offset="0" stop-color="#ff8a52"/><stop offset="1" stop-color="#e8421a"/></linearGradient></defs><path d="M9 15.2 L17 7 H12.7 V2.4 Q12.7 1.4 11.7 1.4 H6.3 Q5.3 1.4 5.3 2.4 V7 H1 Z" fill="url(#gd)" stroke="#c83c14" stroke-width="1.1" stroke-linejoin="round"/><path d="M6.8 2.8 H11.2 V5.4 H6.8Z" fill="#ffc09a" opacity=".6"/></svg><span class="t" style="left:33.4px;top:697.27px;font-size:19.7px;line-height:26px;color:#111;letter-spacing:-1.75px;">GBPCAD</span><span class="t" style="left:219.38px;top:697.27px;font-size:19.7px;line-height:26px;color:#ec3030;letter-spacing:-1.36px;">1.70598</span><span class="t" style="left:333.98px;top:697.27px;font-size:19.7px;line-height:26px;color:#ec3030;letter-spacing:-1.36px;">1.70619</span><span class="t" style="left:434.95px;top:697.27px;font-size:19.7px;line-height:26px;color:#ec3030;letter-spacing:-2.27px;">21</span><svg class="a" style="left:7.4px;top:705.1px" width="18" height="17" viewBox="0 0 18 17"><defs><linearGradient id="gd" x1="0" y1="0" x2="0" y2="1"><stop offset="0" stop-color="#ff8a52"/><stop offset="1" stop-color="#e8421a"/></linearGradient></defs><path d="M9 15.2 L17 7 H12.7 V2.4 Q12.7 1.4 11.7 1.4 H6.3 Q5.3 1.4 5.3 2.4 V7 H1 Z" fill="url(#gd)" stroke="#c83c14" stroke-width="1.1" stroke-linejoin="round"/><path d="M6.8 2.8 H11.2 V5.4 H6.8Z" fill="#ffc09a" opacity=".6"/></svg><span class="t" style="left:33.4px;top:730.02px;font-size:19.7px;line-height:26px;color:#111;letter-spacing:-1.23px;">GBPAUD</span><span class="t" style="left:219.38px;top:730.02px;font-size:19.7px;line-height:26px;color:#3030e6;letter-spacing:-1.36px;">1.79921</span><span class="t" style="left:333.98px;top:730.02px;font-size:19.7px;line-height:26px;color:#3030e6;letter-spacing:-1.36px;">1.79944</span><span class="t" style="left:434.95px;top:730.02px;font-size:19.7px;line-height:26px;color:#3030e6;letter-spacing:-2.27px;">23</span><svg class="a" style="left:7.4px;top:737.25px" width="18" height="17" viewBox="0 0 18 17"><defs><linearGradient id="gu" x1="0" y1="0" x2="0" y2="1"><stop offset="0" stop-color="#52d45c"/><stop offset="1" stop-color="#1fa236"/></linearGradient></defs><path d="M9 0.8 L17 8.6 H12.9 V14.6 Q12.9 15.4 12.1 15.4 H5.9 Q5.1 15.4 5.1 14.6 V8.6 H1 Z" fill="url(#gu)" stroke="#1c8c30" stroke-width="1.1" stroke-linejoin="round"/><path d="M9 3.6 L12.6 7.4 H10.8 V9.6 H7.2 V7.4 H5.4 Z" fill="#9df09f" opacity=".6"/></svg><span class="t" style="left:33.4px;top:762.77px;font-size:19.7px;line-height:26px;color:#111;letter-spacing:-1.56px;">EURNZD</span><span class="t" style="left:219.38px;top:762.77px;font-size:19.7px;line-height:26px;color:#3030e6;letter-spacing:-1.36px;">1.72030</span><span class="t" style="left:333.98px;top:762.77px;font-size:19.7px;line-height:26px;color:#3030e6;letter-spacing:-1.36px;">1.72054</span><span class="t" style="left:434.95px;top:762.77px;font-size:19.7px;line-height:26px;color:#3030e6;letter-spacing:-2.27px;">24</span><svg class="a" style="left:7.4px;top:770px" width="18" height="17" viewBox="0 0 18 17"><defs><linearGradient id="gu" x1="0" y1="0" x2="0" y2="1"><stop offset="0" stop-color="#52d45c"/><stop offset="1" stop-color="#1fa236"/></linearGradient></defs><path d="M9 0.8 L17 8.6 H12.9 V14.6 Q12.9 15.4 12.1 15.4 H5.9 Q5.1 15.4 5.1 14.6 V8.6 H1 Z" fill="url(#gu)" stroke="#1c8c30" stroke-width="1.1" stroke-linejoin="round"/><path d="M9 3.6 L12.6 7.4 H10.8 V9.6 H7.2 V7.4 H5.4 Z" fill="#9df09f" opacity=".6"/></svg><span class="t" style="left:33.4px;top:795.52px;font-size:19.7px;line-height:26px;color:#111;letter-spacing:-2.48px;">EURJPY</span><span class="t" style="left:219.38px;top:795.52px;font-size:19.7px;line-height:26px;color:#ec3030;letter-spacing:-1.36px;">126.164</span><span class="t" style="left:333.98px;top:795.52px;font-size:19.7px;line-height:26px;color:#ec3030;letter-spacing:-1.36px;">126.172</span><span class="t" style="left:443.64px;top:795.52px;font-size:19.7px;line-height:26px;color:#ec3030;">8</span><svg class="a" style="left:7.4px;top:803.35px" width="18" height="17" viewBox="0 0 18 17"><defs><linearGradient id="gd" x1="0" y1="0" x2="0" y2="1"><stop offset="0" stop-color="#ff8a52"/><stop offset="1" stop-color="#e8421a"/></linearGradient></defs><path d="M9 15.2 L17 7 H12.7 V2.4 Q12.7 1.4 11.7 1.4 H6.3 Q5.3 1.4 5.3 2.4 V7 H1 Z" fill="url(#gd)" stroke="#c83c14" stroke-width="1.1" stroke-linejoin="round"/><path d="M6.8 2.8 H11.2 V5.4 H6.8Z" fill="#ffc09a" opacity=".6"/></svg><span class="t" style="left:33.4px;top:828.27px;font-size:19.7px;line-height:26px;color:#111;letter-spacing:-1.84px;">USDCHF</span><span class="t" style="left:219.38px;top:828.27px;font-size:19.7px;line-height:26px;color:#ec3030;letter-spacing:-1.36px;">0.88881</span><span class="t" style="left:333.98px;top:828.27px;font-size:19.7px;line-height:26px;color:#ec3030;letter-spacing:-1.36px;">0.88890</span><span class="t" style="left:443.64px;top:828.27px;font-size:19.7px;line-height:26px;color:#ec3030;">9</span><svg class="a" style="left:7.4px;top:836.1px" width="18" height="17" viewBox="0 0 18 17"><defs><linearGradient id="gd" x1="0" y1="0" x2="0" y2="1"><stop offset="0" stop-color="#ff8a52"/><stop offset="1" stop-color="#e8421a"/></linearGradient></defs><path d="M9 15.2 L17 7 H12.7 V2.4 Q12.7 1.4 11.7 1.4 H6.3 Q5.3 1.4 5.3 2.4 V7 H1 Z" fill="url(#gd)" stroke="#c83c14" stroke-width="1.1" stroke-linejoin="round"/><path d="M6.8 2.8 H11.2 V5.4 H6.8Z" fill="#ffc09a" opacity=".6"/></svg></div>
<div class="a" style="left:511.6px;top:128px;width:490px;height:21px;background:linear-gradient(to right,#9db6d9,#a9c0e0 60%,#bccfe9)"></div>
<span class="t" style="left:515.3px;top:126.97px;font-size:17.7px;line-height:23px;color:#000;letter-spacing:0.08px;">Navigator</span>
<svg class="a" style="left:1008.5px;top:132.2px" width="12" height="12" viewBox="0 0 12 12"><path d="M1.4 2.2 L10.6 10.2 M10.6 2.2 L1.4 10.2" stroke="#0a0a0a" stroke-width="2.9" fill="none"/></svg>
<div class="a" style="left:512.2px;top:151px;width:512px;height:860px;background:#fff;border:1.2px solid #a2a2a2;box-sizing:border-box;overflow:hidden"><svg class="a" style="left:0;top:0" width="120" height="860" viewBox="0 0 120 860"><path d="M21.8 0.8 V1000 M56.3 0.8 V753.6 M56.3 794.8 V1000 M57.9 18.6 H74.1 M57.9 48.07 H74.1 M57.9 77.54 H74.1 M57.9 107.01 H74.1 M57.9 136.48 H74.1 M57.9 165.95 H74.1 M57.9 195.42 H74.1 M57.9 224.89 H74.1 M57.9 254.36 H74.1 M57.9 283.83 H74.1 M57.9 313.3 H74.1 M57.9 342.77 H74.1 M57.9 372.24 H74.1 M57.9 401.71 H74.1 M57.9 431.18 H74.1 M57.9 460.65 H74.1 M57.9 490.12 H74.1 M57.9 519.59 H74.1 M57.9 549.06 H74.1 M57.9 578.53 H74.1 M57.9 608 H74.1 M57.9 637.47 H74.1 M57.9 666.94 H74.1 M57.9 696.41 H74.1 M57.9 725.88 H74.1 M57.9 755.35 H74.1 M29.1 784.82 H40.1 M57.9 814.29 H74.1 M57.9 843.76 H74.1" stroke="#858585" stroke-width="1.6" stroke-dasharray="1.64 1.64" fill="none"/></svg><div class="a" style="left:483.1px;top:0px;width:26.5px;height:850px;background:#f0f0f0"></div><div class="a" style="left:484.1px;top:260.3px;width:24px;height:495px;background:#cdcdcd"></div><svg class="a" style="left:488.6px;top:10px" width="14" height="10" viewBox="0 0 14 10"><path d="M1.5 8.5 L7 2.5 L12.5 8.5" stroke="#606060" stroke-width="2.6" fill="none"/></svg><svg class="a" style="left:77px;top:3.8px" width="25" height="24" viewBox="0 0 25 24"><rect x="0.8" y="0.8" width="21" height="20.6" rx="3.5" fill="#f3dc62" stroke="#c9a92c" stroke-width="1.5"/><rect x="2.4" y="2.4" width="17.8" height="8" rx="2.5" fill="#fbef9a" opacity=".8"/><path d="M14.6 5.2 C11.8 4.2 10.6 6.4 10.2 9.4 L8.6 17.2 C8.2 18.8 7 19 6 18.2 M7.6 10.2 H13.6" stroke="#8a6a14" stroke-width="1.9" fill="none"/><path d="M18.8 13.2 L23.6 18 L18.8 22.8 L14 18 Z" fill="#f6e27a" stroke="#c9a92c" stroke-width="1.4"/></svg><span class="t" style="left:113.4px;top:3.47px;font-size:19.7px;line-height:26px;color:#111;letter-spacing:-0.11px;">Accelerator</span><svg class="a" style="left:77px;top:33.27px" width="25" height="24" viewBox="0 0 25 24"><rect x="0.8" y="0.8" width="21" height="20.6" rx="3.5" fill="#f3dc62" stroke="#c9a92c" stroke-width="1.5"/><rect x="2.4" y="2.4" width="17.8" height="8" rx="2.5" fill="#fbef9a" opacity=".8"/><path d="M14.6 5.2 C11.8 4.2 10.6 6.4 10.2 9.4 L8.6 17.2 C8.2 18.8 7 19 6 18.2 M7.6 10.2 H13.6" stroke="#8a6a14" stroke-width="1.9" fill="none"/><path d="M18.8 13.2 L23.6 18 L18.8 22.8 L14 18 Z" fill="#f6e27a" stroke="#c9a92c" stroke-width="1.4"/></svg><span class="t" style="left:113.4px;top:32.94px;font-size:19.7px;line-height:26px;color:#111;letter-spacing:0.26px;">Accumulation</span><svg class="a" style="left:77px;top:62.74px" width="25" height="24" viewBox="0 0 25 24"><rect x="0.8" y="0.8" width="21" height="20.6" rx="3.5" fill="#f3dc62" stroke="#c9a92c" stroke-width="1.5"/><rect x="2.4" y="2.4" width="17.8" height="8" rx="2.5" fill="#fbef9a" opacity=".8"/><path d="M14.6 5.2 C11.8 4.2 10.6 6.4 10.2 9.4 L8.6 17.2 C8.2 18.8 7 19 6 18.2 M7.6 10.2 H13.6" stroke="#8a6a14" stroke-width="1.9" fill="none"/><path d="M18.8 13.2 L23.6 18 L18.8 22.8 L14 18 Z" fill="#f6e27a" stroke="#c9a92c" stroke-width="1.4"/></svg><span class="t" style="left:113.4px;top:62.41px;font-size:19.7px;line-height:26px;color:#111;letter-spacing:0.29px;">Alligator</span><svg class="a" style="left:77px;top:92.21px" width="25" height="24" viewBox="0 0 25 24"><rect x="0.8" y="0.8" width="21" height="20.6" rx="3.5" fill="#f3dc62" stroke="#c9a92c" stroke-width="1.5"/><rect x="2.4" y="2.4" width="17.8" height="8" rx="2.5" fill="#fbef9a" opacity=".8"/><path d="M14.6 5.2 C11.8 4.2 10.6 6.4 10.2 9.4 L8.6 17.2 C8.2 18.8 7 19 6 18.2 M7.6 10.2 H13.6" stroke="#8a6a14" stroke-width="1.9" fill="none"/><path d="M18.8 13.2 L23.6 18 L18.8 22.8 L14 18 Z" fill="#f6e27a" stroke="#c9a92c" stroke-width="1.4"/></svg><span class="t" style="left:113.4px;top:91.88px;font-size:19.7px;line-height:26px;color:#111;letter-spacing:-1.17px;">ATR</span><svg class="a" style="left:77px;top:121.68px" width="25" height="24" viewBox="0 0 25 24"><rect x="0.8" y="0.8" width="21" height="20.6" rx="3.5" fill="#f3dc62" stroke="#c9a92c" stroke-width="1.5"/><rect x="2.4" y="2.4" width="17.8" height="8" rx="2.5" fill="#fbef9a" opacity=".8"/><path d="M14.6 5.2 C11.8 4.2 10.6 6.4 10.2 9.4 L8.6 17.2 C8.2 18.8 7 19 6 18.2 M7.6 10.2 H13.6" stroke="#8a6a14" stroke-width="1.9" fill="none"/><path d="M18.8 13.2 L23.6 18 L18.8 22.8 L14 18 Z" fill="#f6e27a" stroke="#c9a92c" stroke-width="1.4"/></svg><span class="t" style="left:113.4px;top:121.35px;font-size:19.7px;line-height:26px;color:#111;letter-spacing:-0.36px;">Awesome</span><svg class="a" style="left:77px;top:151.15px" width="25" height="24" viewBox="0 0 25 24"><rect x="0.8" y="0.8" width="21" height="20.6" rx="3.5" fill="#f3dc62" stroke="#c9a92c" stroke-width="1.5"/><rect x="2.4" y="2.4" width="17.8" height="8" rx="2.5" fill="#fbef9a" opacity=".8"/><path d="M14.6 5.2 C11.8 4.2 10.6 6.4 10.2 9.4 L8.6 17.2 C8.2 18.8 7 19 6 18.2 M7.6 10.2 H13.6" stroke="#8a6a14" stroke-width="1.9" fill="none"/><path d="M18.8 13.2 L23.6 18 L18.8 22.8 L14 18 Z" fill="#f6e27a" stroke="#c9a92c" stroke-width="1.4"/></svg><span class="t" style="left:113.4px;top:150.82px;font-size:19.7px;line-height:26px;color:#111;letter-spacing:-0.21px;">ay-MarketProfileDWM.v1.31.rev1</span><svg class="a" style="left:77px;top:180.62px" width="25" height="24" viewBox="0 0 25 24"><rect x="0.8" y="0.8" width="21" height="20.6" rx="3.5" fill="#f3dc62" stroke="#c9a92c" stroke-width="1.5"/><rect x="2.4" y="2.4" width="17.8" height="8" rx="2.5" fill="#fbef9a" opacity=".8"/><path d="M14.6 5.2 C11.8 4.2 10.6 6.4 10.2 9.4 L8.6 17.2 C8.2 18.8 7 19 6 18.2 M7.6 10.2 H13.6" stroke="#8a6a14" stroke-width="1.9" fill="none"/><path d="M18.8 13.2 L23.6 18 L18.8 22.8 L14 18 Z" fill="#f6e27a" stroke="#c9a92c" stroke-width="1.4"/></svg><span class="t" style="left:113.4px;top:180.29px;font-size:19.7px;line-height:26px;color:#111;letter-spacing:-0.67px;">Bands</span><svg class="a" style="left:77px;top:210.09px" width="25" height="24" viewBox="0 0 25 24"><rect x="0.8" y="0.8" width="21" height="20.6" rx="3.5" fill="#f3dc62" stroke="#c9a92c" stroke-width="1.5"/><rect x="2.4" y="2.4" width="17.8" height="8" rx="2.5" fill="#fbef9a" opacity=".8"/><path d="M14.6 5.2 C11.8 4.2 10.6 6.4 10.2 9.4 L8.6 17.2 C8.2 18.8 7 19 6 18.2 M7.6 10.2 H13.6" stroke="#8a6a14" stroke-width="1.9" fill="none"/><path d="M18.8 13.2 L23.6 18 L18.8 22.8 L14 18 Z" fill="#f6e27a" stroke="#c9a92c" stroke-width="1.4"/></svg><span class="t" style="left:113.4px;top:209.76px;font-size:19.7px;line-height:26px;color:#111;letter-spacing:-1.11px;">Bears</span><svg class="a" style="left:77px;top:239.56px" width="25" height="24" viewBox="0 0 25 24"><rect x="0.8" y="0.8" width="21" height="20.6" rx="3.5" fill="#f3dc62" stroke="#c9a92c" stroke-width="1.5"/><rect x="2.4" y="2.4" width="17.8" height="8" rx="2.5" fill="#fbef9a" opacity=".8"/><path d="M14.6 5.2 C11.8 4.2 10.6 6.4 10.2 9.4 L8.6 17.2 C8.2 18.8 7 19 6 18.2 M7.6 10.2 H13.6" stroke="#8a6a14" stroke-width="1.9" fill="none"/><path d="M18.8 13.2 L23.6 18 L18.8 22.8 L14 18 Z" fill="#f6e27a" stroke="#c9a92c" stroke-width="1.4"/></svg><span class="t" style="left:113.4px;top:239.23px;font-size:19.7px;line-height:26px;color:#111;letter-spacing:-0.34px;">Bulls</span><svg class="a" style="left:77px;top:269.03px" width="25" height="24" viewBox="0 0 25 24"><rect x="0.8" y="0.8" width="21" height="20.6" rx="3.5" fill="#f3dc62" stroke="#c9a92c" stroke-width="1.5"/><rect x="2.4" y="2.4" width="17.8" height="8" rx="2.5" fill="#fbef9a" opacity=".8"/><path d="M14.6 5.2 C11.8 4.2 10.6 6.4 10.2 9.4 L8.6 17.2 C8.2 18.8 7 19 6 18.2 M7.6 10.2 H13.6" stroke="#8a6a14" stroke-width="1.9" fill="none"/><path d="M18.8 13.2 L23.6 18 L18.8 22.8 L14 18 Z" fill="#f6e27a" stroke="#c9a92c" stroke-width="1.4"/></svg><span class="t" style="left:113.4px;top:268.7px;font-size:19.7px;line-height:26px;color:#111;letter-spacing:-2.02px;">CCI</span><svg class="a" style="left:77px;top:298.5px" width="25" height="24" viewBox="0 0 25 24"><rect x="0.8" y="0.8" width="21" height="20.6" rx="3.5" fill="#f3dc62" stroke="#c9a92c" stroke-width="1.5"/><rect x="2.4" y="2.4" width="17.8" height="8" rx="2.5" fill="#fbef9a" opacity=".8"/><path d="M14.6 5.2 C11.8 4.2 10.6 6.4 10.2 9.4 L8.6 17.2 C8.2 18.8 7 19 6 18.2 M7.6 10.2 H13.6" stroke="#8a6a14" stroke-width="1.9" fill="none"/><path d="M18.8 13.2 L23.6 18 L18.8 22.8 L14 18 Z" fill="#f6e27a" stroke="#c9a92c" stroke-width="1.4"/></svg><span class="t" style="left:113.4px;top:298.17px;font-size:19.7px;line-height:26px;color:#111;letter-spacing:-0.12px;">Custom Moving Averages</span><svg class="a" style="left:77px;top:327.97px" width="25" height="24" viewBox="0 0 25 24"><rect x="0.8" y="0.8" width="21" height="20.6" rx="3.5" fill="#f3dc62" stroke="#c9a92c" stroke-width="1.5"/><rect x="2.4" y="2.4" width="17.8" height="8" rx="2.5" fill="#fbef9a" opacity=".8"/><path d="M14.6 5.2 C11.8 4.2 10.6 6.4 10.2 9.4 L8.6 17.2 C8.2 18.8 7 19 6 18.2 M7.6 10.2 H13.6" stroke="#8a6a14" stroke-width="1.9" fill="none"/><path d="M18.8 13.2 L23.6 18 L18.8 22.8 L14 18 Z" fill="#f6e27a" stroke="#c9a92c" stroke-width="1.4"/></svg><span class="t" style="left:113.4px;top:327.64px;font-size:19.7px;line-height:26px;color:#111;letter-spacing:-0.39px;">Fibonacci Waves Analyzer V1</span><svg class="a" style="left:77px;top:357.44px" width="25" height="24" viewBox="0 0 25 24"><rect x="0.8" y="0.8" width="21" height="20.6" rx="3.5" fill="#f3dc62" stroke="#c9a92c" stroke-width="1.5"/><rect x="2.4" y="2.4" width="17.8" height="8" rx="2.5" fill="#fbef9a" opacity=".8"/><path d="M14.6 5.2 C11.8 4.2 10.6 6.4 10.2 9.4 L8.6 17.2 C8.2 18.8 7 19 6 18.2 M7.6 10.2 H13.6" stroke="#8a6a14" stroke-width="1.9" fill="none"/><path d="M18.8 13.2 L23.6 18 L18.8 22.8 L14 18 Z" fill="#f6e27a" stroke="#c9a92c" stroke-width="1.4"/></svg><span class="t" style="left:113.4px;top:357.11px;font-size:19.7px;line-height:26px;color:#111;letter-spacing:-0.06px;">Heiken Ashi</span><svg class="a" style="left:77px;top:386.91px" width="25" height="24" viewBox="0 0 25 24"><rect x="0.8" y="0.8" width="21" height="20.6" rx="3.5" fill="#f3dc62" stroke="#c9a92c" stroke-width="1.5"/><rect x="2.4" y="2.4" width="17.8" height="8" rx="2.5" fill="#fbef9a" opacity=".8"/><path d="M14.6 5.2 C11.8 4.2 10.6 6.4 10.2 9.4 L8.6 17.2 C8.2 18.8 7 19 6 18.2 M7.6 10.2 H13.6" stroke="#8a6a14" stroke-width="1.9" fill="none"/><path d="M18.8 13.2 L23.6 18 L18.8 22.8 L14 18 Z" fill="#f6e27a" stroke="#c9a92c" stroke-width="1.4"/></svg><span class="t" style="left:113.4px;top:386.58px;font-size:19.7px;line-height:26px;color:#111;letter-spacing:0.19px;">Ichimoku</span><svg class="a" style="left:77px;top:416.38px" width="25" height="24" viewBox="0 0 25 24"><rect x="0.8" y="0.8" width="21" height="20.6" rx="3.5" fill="#f3dc62" stroke="#c9a92c" stroke-width="1.5"/><rect x="2.4" y="2.4" width="17.8" height="8" rx="2.5" fill="#fbef9a" opacity=".8"/><path d="M14.6 5.2 C11.8 4.2 10.6 6.4 10.2 9.4 L8.6 17.2 C8.2 18.8 7 19 6 18.2 M7.6 10.2 H13.6" stroke="#8a6a14" stroke-width="1.9" fill="none"/><path d="M18.8 13.2 L23.6 18 L18.8 22.8 L14 18 Z" fill="#f6e27a" stroke="#c9a92c" stroke-width="1.4"/></svg><span class="t" style="left:113.4px;top:416.05px;font-size:19.7px;line-height:26px;color:#111;letter-spacing:-0.44px;">iExposure</span><svg class="a" style="left:77px;top:445.85px" width="25" height="24" viewBox="0 0 25 24"><rect x="0.8" y="0.8" width="21" height="20.6" rx="3.5" fill="#f3dc62" stroke="#c9a92c" stroke-width="1.5"/><rect x="2.4" y="2.4" width="17.8" height="8" rx="2.5" fill="#fbef9a" opacity=".8"/><path d="M14.6 5.2 C11.8 4.2 10.6 6.4 10.2 9.4 L8.6 17.2 C8.2 18.8 7 19 6 18.2 M7.6 10.2 H13.6" stroke="#8a6a14" stroke-width="1.9" fill="none"/><path d="M18.8 13.2 L23.6 18 L18.8 22.8 L14 18 Z" fill="#f6e27a" stroke="#c9a92c" stroke-width="1.4"/></svg><span class="t" style="left:113.4px;top:445.52px;font-size:19.7px;line-height:26px;color:#111;letter-spacing:-0.56px;">MACD</span><svg class="a" style="left:77px;top:475.32px" width="25" height="24" viewBox="0 0 25 24"><rect x="0.8" y="0.8" width="21" height="20.6" rx="3.5" fill="#f3dc62" stroke="#c9a92c" stroke-width="1.5"/><rect x="2.4" y="2.4" width="17.8" height="8" rx="2.5" fill="#fbef9a" opacity=".8"/><path d="M14.6 5.2 C11.8 4.2 10.6 6.4 10.2 9.4 L8.6 17.2 C8.2 18.8 7 19 6 18.2 M7.6 10.2 H13.6" stroke="#8a6a14" stroke-width="1.9" fill="none"/><path d="M18.8 13.2 L23.6 18 L18.8 22.8 L14 18 Z" fill="#f6e27a" stroke="#c9a92c" stroke-width="1.4"/></svg><span class="t" style="left:113.4px;top:474.99px;font-size:19.7px;line-height:26px;color:#111;letter-spacing:0.39px;">Momentum</span><svg class="a" style="left:77px;top:504.79px" width="25" height="24" viewBox="0 0 25 24"><rect x="0.8" y="0.8" width="21" height="20.6" rx="3.5" fill="#f3dc62" stroke="#c9a92c" stroke-width="1.5"/><rect x="2.4" y="2.4" width="17.8" height="8" rx="2.5" fill="#fbef9a" opacity=".8"/><path d="M14.6 5.2 C11.8 4.2 10.6 6.4 10.2 9.4 L8.6 17.2 C8.2 18.8 7 19 6 18.2 M7.6 10.2 H13.6" stroke="#8a6a14" stroke-width="1.9" fill="none"/><path d="M18.8 13.2 L23.6 18 L18.8 22.8 L14 18 Z" fill="#f6e27a" stroke="#c9a92c" stroke-width="1.4"/></svg><span class="t" style="left:113.4px;top:504.46px;font-size:19.7px;line-height:26px;color:#111;letter-spacing:-0.15px;">OsMA</span><svg class="a" style="left:77px;top:534.26px" width="25" height="24" viewBox="0 0 25 24"><rect x="0.8" y="0.8" width="21" height="20.6" rx="3.5" fill="#f3dc62" stroke="#c9a92c" stroke-width="1.5"/><rect x="2.4" y="2.4" width="17.8" height="8" rx="2.5" fill="#fbef9a" opacity=".8"/><path d="M14.6 5.2 C11.8 4.2 10.6 6.4 10.2 9.4 L8.6 17.2 C8.2 18.8 7 19 6 18.2 M7.6 10.2 H13.6" stroke="#8a6a14" stroke-width="1.9" fill="none"/><path d="M18.8 13.2 L23.6 18 L18.8 22.8 L14 18 Z" fill="#f6e27a" stroke="#c9a92c" stroke-width="1.4"/></svg><span class="t" style="left:113.4px;top:533.93px;font-size:19.7px;line-height:26px;color:#111;letter-spacing:-0.2px;">Parabolic</span><svg class="a" style="left:77px;top:563.73px" width="25" height="24" viewBox="0 0 25 24"><rect x="0.8" y="0.8" width="21" height="20.6" rx="3.5" fill="#f3dc62" stroke="#c9a92c" stroke-width="1.5"/><rect x="2.4" y="2.4" width="17.8" height="8" rx="2.5" fill="#fbef9a" opacity=".8"/><path d="M14.6 5.2 C11.8 4.2 10.6 6.4 10.2 9.4 L8.6 17.2 C8.2 18.8 7 19 6 18.2 M7.6 10.2 H13.6" stroke="#8a6a14" stroke-width="1.9" fill="none"/><path d="M18.8 13.2 L23.6 18 L18.8 22.8 L14 18 Z" fill="#f6e27a" stroke="#c9a92c" stroke-width="1.4"/></svg><span class="t" style="left:113.4px;top:563.4px;font-size:19.7px;line-height:26px;color:#111;letter-spacing:-0.2px;">QuantActionFX-Signal-V1.57</span><svg class="a" style="left:77px;top:593.2px" width="25" height="24" viewBox="0 0 25 24"><rect x="0.8" y="0.8" width="21" height="20.6" rx="3.5" fill="#f3dc62" stroke="#c9a92c" stroke-width="1.5"/><rect x="2.4" y="2.4" width="17.8" height="8" rx="2.5" fill="#fbef9a" opacity=".8"/><path d="M14.6 5.2 C11.8 4.2 10.6 6.4 10.2 9.4 L8.6 17.2 C8.2 18.8 7 19 6 18.2 M7.6 10.2 H13.6" stroke="#8a6a14" stroke-width="1.9" fill="none"/><path d="M18.8 13.2 L23.6 18 L18.8 22.8 L14 18 Z" fill="#f6e27a" stroke="#c9a92c" stroke-width="1.4"/></svg><span class="t" style="left:113.4px;top:592.87px;font-size:19.7px;line-height:26px;color:#111;letter-spacing:-2.2px;">RSI</span><svg class="a" style="left:77px;top:622.67px" width="25" height="24" viewBox="0 0 25 24"><rect x="0.8" y="0.8" width="21" height="20.6" rx="3.5" fill="#f3dc62" stroke="#c9a92c" stroke-width="1.5"/><rect x="2.4" y="2.4" width="17.8" height="8" rx="2.5" fill="#fbef9a" opacity=".8"/><path d="M14.6 5.2 C11.8 4.2 10.6 6.4 10.2 9.4 L8.6 17.2 C8.2 18.8 7 19 6 18.2 M7.6 10.2 H13.6" stroke="#8a6a14" stroke-width="1.9" fill="none"/><path d="M18.8 13.2 L23.6 18 L18.8 22.8 L14 18 Z" fill="#f6e27a" stroke="#c9a92c" stroke-width="1.4"/></svg><span class="t" style="left:113.4px;top:622.34px;font-size:19.7px;line-height:26px;color:#111;letter-spacing:-0.42px;">Signal Chart</span><svg class="a" style="left:77px;top:652.14px" width="25" height="24" viewBox="0 0 25 24"><rect x="0.8" y="0.8" width="21" height="20.6" rx="3.5" fill="#f3dc62" stroke="#c9a92c" stroke-width="1.5"/><rect x="2.4" y="2.4" width="17.8" height="8" rx="2.5" fill="#fbef9a" opacity=".8"/><path d="M14.6 5.2 C11.8 4.2 10.6 6.4 10.2 9.4 L8.6 17.2 C8.2 18.8 7 19 6 18.2 M7.6 10.2 H13.6" stroke="#8a6a14" stroke-width="1.9" fill="none"/><path d="M18.8 13.2 L23.6 18 L18.8 22.8 L14 18 Z" fill="#f6e27a" stroke="#c9a92c" stroke-width="1.4"/></svg><span class="t" style="left:113.4px;top:651.81px;font-size:19.7px;line-height:26px;color:#111;letter-spacing:-0.23px;">Stochastic</span><svg class="a" style="left:77px;top:681.61px" width="25" height="24" viewBox="0 0 25 24"><rect x="0.8" y="0.8" width="21" height="20.6" rx="3.5" fill="#f3dc62" stroke="#c9a92c" stroke-width="1.5"/><rect x="2.4" y="2.4" width="17.8" height="8" rx="2.5" fill="#fbef9a" opacity=".8"/><path d="M14.6 5.2 C11.8 4.2 10.6 6.4 10.2 9.4 L8.6 17.2 C8.2 18.8 7 19 6 18.2 M7.6 10.2 H13.6" stroke="#8a6a14" stroke-width="1.9" fill="none"/><path d="M18.8 13.2 L23.6 18 L18.8 22.8 L14 18 Z" fill="#f6e27a" stroke="#c9a92c" stroke-width="1.4"/></svg><span class="t" style="left:113.4px;top:681.28px;font-size:19.7px;line-height:26px;color:#111;letter-spacing:-0.25px;">Trading Guard</span><svg class="a" style="left:77px;top:711.08px" width="25" height="24" viewBox="0 0 25 24"><rect x="0.8" y="0.8" width="21" height="20.6" rx="3.5" fill="#f3dc62" stroke="#c9a92c" stroke-width="1.5"/><rect x="2.4" y="2.4" width="17.8" height="8" rx="2.5" fill="#fbef9a" opacity=".8"/><path d="M14.6 5.2 C11.8 4.2 10.6 6.4 10.2 9.4 L8.6 17.2 C8.2 18.8 7 19 6 18.2 M7.6 10.2 H13.6" stroke="#8a6a14" stroke-width="1.9" fill="none"/><path d="M18.8 13.2 L23.6 18 L18.8 22.8 L14 18 Z" fill="#f6e27a" stroke="#c9a92c" stroke-width="1.4"/></svg><span class="t" style="left:113.4px;top:710.75px;font-size:19.7px;line-height:26px;color:#111;letter-spacing:-0.27px;">Trend Filter</span><svg class="a" style="left:77px;top:740.55px" width="25" height="24" viewBox="0 0 25 24"><rect x="0.8" y="0.8" width="21" height="20.6" rx="3.5" fill="#f3dc62" stroke="#c9a92c" stroke-width="1.5"/><rect x="2.4" y="2.4" width="17.8" height="8" rx="2.5" fill="#fbef9a" opacity=".8"/><path d="M14.6 5.2 C11.8 4.2 10.6 6.4 10.2 9.4 L8.6 17.2 C8.2 18.8 7 19 6 18.2 M7.6 10.2 H13.6" stroke="#8a6a14" stroke-width="1.9" fill="none"/><path d="M18.8 13.2 L23.6 18 L18.8 22.8 L14 18 Z" fill="#f6e27a" stroke="#c9a92c" stroke-width="1.4"/></svg><span class="t" style="left:113.4px;top:740.22px;font-size:19.7px;line-height:26px;color:#111;letter-spacing:-0.1px;">ZigZag</span><svg class="a" style="left:15.2px;top:778.52px" width="14" height="14" viewBox="0 0 14 14"><rect x="0.8" y="0.8" width="12" height="12" fill="#fff" stroke="#9a9a9a" stroke-width="1.4"/><path d="M3.4 6.8 H10.2" stroke="#3a3aa0" stroke-width="1.7"/></svg><svg class="a" style="left:42.1px;top:770.02px" width="28" height="25" viewBox="0 0 28 25"><path d="M8 13 L19 13 L23.5 21 L19 24.5 L9.5 18 Z" fill="#f3dc62" stroke="#c9a92c" stroke-width="1.2"/><ellipse cx="13" cy="9.5" rx="12.3" ry="5.6" fill="#4aa6de" stroke="#2f82bd" stroke-width="1.2"/><ellipse cx="13" cy="6.2" rx="6.8" ry="4.8" fill="#62b8ea" stroke="#2f82bd" stroke-width="1"/><path d="M20.2 16.6 L24.6 21 L20.2 25.4 L15.8 21 Z" fill="#f6e27a" stroke="#c9a92c" stroke-width="1.2" transform="translate(0,-1.4)"/></svg><span class="t" style="left:78.6px;top:769.69px;font-size:19.7px;line-height:26px;color:#111;letter-spacing:-0.27px;">Expert Advisors</span><svg class="a" style="left:76.6px;top:799.49px" width="28" height="25" viewBox="0 0 28 25"><path d="M8 13 L19 13 L23.5 21 L19 24.5 L9.5 18 Z" fill="#f3dc62" stroke="#c9a92c" stroke-width="1.2"/><ellipse cx="13" cy="9.5" rx="12.3" ry="5.6" fill="#4aa6de" stroke="#2f82bd" stroke-width="1.2"/><ellipse cx="13" cy="6.2" rx="6.8" ry="4.8" fill="#62b8ea" stroke="#2f82bd" stroke-width="1"/><path d="M20.2 16.6 L24.6 21 L20.2 25.4 L15.8 21 Z" fill="#f6e27a" stroke="#c9a92c" stroke-width="1.2" transform="translate(0,-1.4)"/></svg><span class="t" style="left:113.4px;top:799.16px;font-size:19.7px;line-height:26px;color:#111;letter-spacing:-0.66px;">MACD Sample</span><svg class="a" style="left:76.6px;top:828.96px" width="28" height="25" viewBox="0 0 28 25"><path d="M8 13 L19 13 L23.5 21 L19 24.5 L9.5 18 Z" fill="#f3dc62" stroke="#c9a92c" stroke-width="1.2"/><ellipse cx="13" cy="9.5" rx="12.3" ry="5.6" fill="#4aa6de" stroke="#2f82bd" stroke-width="1.2"/><ellipse cx="13" cy="6.2" rx="6.8" ry="4.8" fill="#62b8ea" stroke="#2f82bd" stroke-width="1"/><path d="M20.2 16.6 L24.6 21 L20.2 25.4 L15.8 21 Z" fill="#f6e27a" stroke="#c9a92c" stroke-width="1.2" transform="translate(0,-1.4)"/></svg><span class="t" style="left:113.4px;top:828.63px;font-size:19.7px;line-height:26px;color:#111;letter-spacing:0.13px;">Moving Average</span></div>
<div class="a" style="left:1024.3px;top:128px;width:8px;height:872px;background:#f0f0f0"></div>
<svg id="chart" width="2000" height="1000" viewBox="0 0 2000 1000" style="position:absolute;left:0;top:0">
<rect x="1032" y="125.5" width="968" height="876" fill="#000"/>
<rect x="1030.5" y="123.4" width="970" height="3" fill="url(#shd)"/><rect x="1030.4" y="125" width="2.2" height="876" fill="url(#shl)"/>
<defs><linearGradient id="shl" x1="0" y1="0" x2="1" y2="0"><stop offset="0" stop-color="#d0d0d0"/><stop offset="1" stop-color="#101010"/></linearGradient><linearGradient id="shd" x1="0" y1="0" x2="0" y2="1"><stop offset="0" stop-color="#b0b0b0"/><stop offset="1" stop-color="#202020"/></linearGradient><clipPath id="cm"><rect x="1038" y="131" width="897" height="668"/></clipPath><clipPath id="cs"><rect x="1038" y="804" width="897" height="200"/></clipPath></defs>
<path d="M1038 185.8 H1935 M1038 241.3 H1935 M1038 296.9 H1935 M1038 351.8 H1935 M1038 407.2 H1935 M1038 462.5 H1935 M1038 517 H1935 M1038 572.3 H1935 M1038 627.8 H1935 M1038 683.5 H1935 M1038 738.2 H1935 M1038 793.4 H1935 M1090.9 131 V799 M1143.4 131 V799 M1195.8 131 V799 M1248.3 131 V799 M1300.8 131 V799 M1353.3 131 V799 M1405.8 131 V799 M1458.2 131 V799 M1510.7 131 V799 M1563.2 131 V799 M1615.7 131 V799 M1668.2 131 V799 M1720.6 131 V799 M1773.1 131 V799 M1825.6 131 V799 M1878.1 131 V799 M1930.6 131 V799" stroke="#8c939c" stroke-width="1.5" stroke-dasharray="5.2 4.6" fill="none" clip-path="url(#cm)"/>
<path d="M1038 860.3 H1935 M1038 914.3 H1935 M1038 968.6 H1935 M1090.9 805 V1000 M1143.4 805 V1000 M1195.8 805 V1000 M1248.3 805 V1000 M1300.8 805 V1000 M1353.3 805 V1000 M1405.8 805 V1000 M1458.2 805 V1000 M1510.7 805 V1000 M1563.2 805 V1000 M1615.7 805 V1000 M1668.2 805 V1000 M1720.6 805 V1000 M1773.1 805 V1000 M1825.6 805 V1000 M1878.1 805 V1000 M1930.6 805 V1000" stroke="#8c939c" stroke-width="1.5" stroke-dasharray="5.2 4.6" fill="none" clip-path="url(#cs)"/>
<path d="M1195.8 131 V799 M1195.8 805 V1000 M1602.6 131 V799 M1602.6 805 V1000" stroke="#e8e8e8" stroke-width="1.8" stroke-dasharray="5.2 4.6" fill="none"/>
<path d="M1038 544.7 H1936" stroke="#8a9bb0" stroke-width="1.6" fill="none"/>
<g clip-path="url(#cm)">
<path d="M1038.4 637.6 V715 M1051.5 650.6 V728 M1064.6 668.4 V771 M1077.8 701.4 V714.4 M1077.8 718.5 V769 M1090.9 704 V743 M1104 673 V719.6 M1104 728 V763 M1117.1 706 V779.4 M1130.2 659 V690 M1130.2 769 V775.6 M1143.4 657 V669 M1143.4 690 V738 M1156.5 594.4 V641 M1156.5 669 V712 M1169.6 622.4 V683.6 M1182.7 612.6 V705.6 M1195.8 533 V601.6 M1195.8 643 V687.6 M1209 585 V710 M1222.1 658 V660 M1222.1 688.4 V743 M1235.2 552 V575 M1235.2 660.4 V679.6 M1248.3 473.6 V569 M1248.3 577.6 V604 M1261.4 547.6 V648 M1274.6 571 V669.6 M1287.7 436 V466 M1287.7 609 V610 M1300.8 426 V534 M1313.9 461 V558 M1327 277 V336.4 M1327 500.4 V511 M1340.2 301.6 V383 M1353.3 306.4 V331.6 M1353.3 363 V398.5 M1366.4 281 V281.6 M1366.4 331.6 V389.3 M1379.5 169 V202.4 M1379.5 280.8 V317.6 M1392.6 167 V294 M1405.8 277.6 V438 M1418.9 275.6 V308.6 M1432 242.4 V267.6 M1432 310 V320.4 M1445.1 252.4 V351 M1458.2 249 V320 M1471.4 272 V425.3 M1484.5 313 V422 M1497.6 386.7 V397.6 M1497.6 405.8 V481 M1510.7 393 V520 M1523.8 473.8 V581 M1537 481.6 V533 M1537 567.4 V578 M1550.1 488 V599 M1563.2 483.6 V507 M1563.2 578.4 V645 M1576.3 472 V587.6 M1589.4 534 V537.6 M1589.4 562 V574 M1602.6 472 V526.4 M1602.6 541 V576 M1615.7 524 V625 M1628.8 531 V543 M1628.8 620 V630 M1641.9 542 V681 M1655 485 V500 M1655 621.3 V645 M1668.2 480 V579 M1681.3 562 V628 M1694.4 569 V659.6 M1707.5 573.6 V585 M1707.5 629.3 V635 M1720.6 510 V664 M1733.8 516 V544.4 M1733.8 654.4 V664" stroke="#00e400" stroke-width="1.7" fill="none"/>
<path d="M1074.5 715.1 H1081.1 V717.8 H1074.5 Z M1100.7 720.3 H1107.3 V727.3 H1100.7 Z M1126.9 690.7 H1133.5 V768.3 H1126.9 Z M1140.1 669.7 H1146.7 V689.3 H1140.1 Z M1153.2 641.7 H1159.8 V668.3 H1153.2 Z M1192.5 602.3 H1199.1 V642.3 H1192.5 Z M1218.8 660.7 H1225.4 V687.7 H1218.8 Z M1231.9 575.7 H1238.5 V659.7 H1231.9 Z M1245 569.7 H1251.6 V576.9 H1245 Z M1284.4 466.7 H1291 V608.3 H1284.4 Z M1323.7 337.1 H1330.3 V499.7 H1323.7 Z M1350 332.3 H1356.6 V362.3 H1350 Z M1363.1 282.3 H1369.7 V330.9 H1363.1 Z M1376.2 203.1 H1382.8 V280.1 H1376.2 Z M1415.6 309.3 H1422.2 V362.3 H1415.6 Z M1428.7 268.3 H1435.3 V309.3 H1428.7 Z M1494.3 398.3 H1500.9 V405.1 H1494.3 Z M1533.7 533.7 H1540.3 V566.7 H1533.7 Z M1559.9 507.7 H1566.5 V577.7 H1559.9 Z M1586.1 538.3 H1592.7 V561.3 H1586.1 Z M1599.3 527.1 H1605.9 V540.3 H1599.3 Z M1625.5 543.7 H1632.1 V619.3 H1625.5 Z M1651.7 500.7 H1658.3 V620.6 H1651.7 Z M1704.2 585.7 H1710.8 V628.6 H1704.2 Z M1730.5 545.1 H1737.1 V653.7 H1730.5 Z" stroke="#00e400" stroke-width="1.7" fill="#000"/>
<path d="M1035.2 661.8 H1041.6 V693.2 H1035.2 Z M1061.4 697.3 H1067.8 V718.7 H1061.4 Z M1087.7 715.2 H1094.1 V727.2 H1087.7 Z M1113.9 718.8 H1120.3 V766.2 H1113.9 Z M1166.4 639.8 H1172.8 V670.2 H1166.4 Z M1179.5 669.8 H1185.9 V673.2 H1179.5 Z M1205.8 602.8 H1212.2 V689.2 H1205.8 Z M1258.2 568.8 H1264.6 V570.2 H1258.2 Z M1271.4 571.8 H1277.8 V608.8 H1271.4 Z M1297.6 466.8 H1304 V496.2 H1297.6 Z M1337 337.2 H1343.4 V362.2 H1337 Z M1389.4 203.2 H1395.8 V285.2 H1389.4 Z M1402.6 286.6 H1409 V362.2 H1402.6 Z M1441.9 266.6 H1448.3 V276.8 H1441.9 Z M1455 277.8 H1461.4 V282.2 H1455 Z M1468.2 282.8 H1474.6 V344.2 H1468.2 Z M1481.3 345 H1487.7 V404.2 H1481.3 Z M1507.5 396.4 H1513.9 V497.4 H1507.5 Z M1520.6 500.8 H1527 V568.5 H1520.6 Z M1546.9 535.8 H1553.3 V579.8 H1546.9 Z M1573.1 507.8 H1579.5 V561.6 H1573.1 Z M1612.5 528.8 H1618.9 V619.2 H1612.5 Z M1638.7 543.8 H1645.1 V621 H1638.7 Z M1665 499.4 H1671.4 V575.2 H1665 Z M1678.1 576.8 H1684.5 V612.5 H1678.1 Z M1691.2 613.8 H1697.6 V630.2 H1691.2 Z M1717.4 586.4 H1723.8 V653.6 H1717.4 Z" stroke="#30ff30" stroke-width="1.9" fill="#fff"/>
<path d="M1047.4 697 H1055.6 M1309.8 498 H1318" stroke="#00e400" stroke-width="2" fill="none"/>
<polyline points="1095,799 1106,782 1116,769 1126,755 1134,743.5 1144,732 1170,719 1196,707 1210,703 1222,698 1234,692 1246,682 1260,670 1274,664 1288,657 1300,650 1314,641 1324,627 1338,608 1352,590 1364,572 1378,544 1392,518 1410,496 1434,462 1458,431.5 1470,420.5 1486,404 1500,391 1520,389 1536,385.6 1554,385.6 1570,389 1588,393 1602,399 1616,414 1630,425 1644,443 1660,460 1674,473 1690,491 1706,509 1720,526 1733.6,540" stroke="#dcdc00" stroke-width="1.35" fill="none" stroke-linejoin="round"/>
</g>
<g clip-path="url(#cs)" fill="none" stroke-width="1.35" stroke-linejoin="round">
<polyline points="1038.4,857 1051.5,871 1064.6,894 1077.8,911 1090.9,927 1104,932 1117.1,945.6 1130.2,945.6 1143.4,943.6 1156.5,930 1169.6,920 1182.7,919.6 1195.8,908.6 1209,906.6 1222.1,921 1235.2,913.6 1248.3,897 1261.4,899 1274.6,906 1287.7,898.6 1300.8,893 1313.9,897 1327,885.6 1340.2,879 1353.3,876.6 1366.4,870 1379.5,855 1392.6,841 1405.8,860 1418.9,875 1432,880 1445.1,893 1458.2,904.6 1471.4,911 1484.5,917.6 1497.6,909 1510.7,898 1523.8,880 1537,863 1550.1,846 1563.2,830 1576.3,820.6 1589.4,813 1602.6,834 1615.7,841 1628.8,846 1641.9,842 1655,854 1668.2,865.6 1681.3,860 1694.4,848 1707.5,841 1720.6,850 1733.8,858" stroke="#bcbcc0"/>
<polyline points="1038.4,904.4 1051.5,921 1064.6,937 1077.8,951 1090.9,963 1104,950.4 1117.1,962 1130.2,945 1143.4,955.6 1156.5,931 1169.6,945 1182.7,957 1195.8,935.6 1209,948 1222.1,960.6 1235.2,914 1248.3,889 1261.4,908 1274.6,926 1287.7,889 1300.8,902 1313.9,920.6 1327,885 1340.2,904.6 1353.3,922.4 1366.4,920.6 1379.5,886 1392.6,904 1405.8,921 1418.9,936 1432,919.6 1445.1,938 1458.2,949 1471.4,962 1484.5,971 1497.6,980 1510.7,987 1523.8,994 1537,999 1550.1,1003 1563.2,1006 1576.3,1008 1589.4,1006.2 1602.6,975 1615.7,982 1628.8,989 1641.9,996 1655,977 1668.2,983 1681.3,989 1694.4,995 1707.5,1001 1720.6,980 1733.8,985" stroke="#84ec00"/>
<polyline points="1038.4,954.4 1051.5,952 1064.6,937 1077.8,949 1090.9,963 1104,971.6 1117.1,965 1130.2,975 1143.4,983.6 1156.5,991 1169.6,996.6 1182.7,988 1195.8,994 1209,987 1222.1,969 1235.2,979 1248.3,987 1261.4,963 1274.6,957.6 1287.7,969 1300.8,976 1313.9,968 1327,978 1340.2,985 1353.3,981.6 1366.4,989 1379.5,995 1392.6,1000 1405.8,947 1418.9,957 1432,968.6 1445.1,957 1458.2,967 1471.4,929.6 1484.5,944 1497.6,914 1510.7,909 1523.8,888 1537,907 1550.1,913.6 1563.2,909 1576.3,928 1589.4,943 1602.6,956 1615.7,931 1628.8,942.6 1641.9,931 1655,944 1668.2,957.6 1681.3,918 1694.4,909.6 1707.5,927 1720.6,942 1733.8,953" stroke="#ec1010"/>
</g>
<path d="M1037.3 800 V130.4 H1935.3 V800 Z" stroke="#fff" stroke-width="1.7" fill="none"/>
<path d="M1037.3 1001 V802.8 H1935.3 V1001" stroke="#fff" stroke-width="1.7" fill="none"/>
<path d="M1936 185.8 H1940.2 M1936 241.3 H1940.2 M1936 296.9 H1940.2 M1936 351.8 H1940.2 M1936 407.2 H1940.2 M1936 462.5 H1940.2 M1936 517 H1940.2 M1936 572.3 H1940.2 M1936 627.8 H1940.2 M1936 683.5 H1940.2 M1936 738.2 H1940.2 M1936 793.4 H1940.2 M1936 860.3 H1940.2 M1936 914.3 H1940.2 M1936 968.6 H1940.2" stroke="#fff" stroke-width="1.6" fill="none"/>
<path d="M1745.5 131.2 H1761.5 L1753.5 139.5 Z" fill="#8797ab"/>
<path d="M1042.6 141.3 H1054.6 L1048.6 147.6 Z" fill="#fff"/>
<rect x="1937.8" y="535.6" width="59" height="18" fill="#fff"/>
<text x="1944.5" y="191.4" fill="#fff" style="font-family:'Liberation Sans',sans-serif;font-size:15.8px" textLength="45.5" lengthAdjust="spacingAndGlyphs">74.000</text>
<text x="1944.5" y="246.9" fill="#fff" style="font-family:'Liberation Sans',sans-serif;font-size:15.8px" textLength="45.5" lengthAdjust="spacingAndGlyphs">73.895</text>
<text x="1944.5" y="302.5" fill="#fff" style="font-family:'Liberation Sans',sans-serif;font-size:15.8px" textLength="45.5" lengthAdjust="spacingAndGlyphs">73.790</text>
<text x="1944.5" y="357.4" fill="#fff" style="font-family:'Liberation Sans',sans-serif;font-size:15.8px" textLength="45.5" lengthAdjust="spacingAndGlyphs">73.690</text>
<text x="1944.5" y="412.8" fill="#fff" style="font-family:'Liberation Sans',sans-serif;font-size:15.8px" textLength="45.5" lengthAdjust="spacingAndGlyphs">73.585</text>
<text x="1944.5" y="468.1" fill="#fff" style="font-family:'Liberation Sans',sans-serif;font-size:15.8px" textLength="45.5" lengthAdjust="spacingAndGlyphs">73.480</text>
<text x="1944.5" y="522.6" fill="#fff" style="font-family:'Liberation Sans',sans-serif;font-size:15.8px" textLength="45.5" lengthAdjust="spacingAndGlyphs">73.380</text>
<text x="1944.5" y="577.9" fill="#fff" style="font-family:'Liberation Sans',sans-serif;font-size:15.8px" textLength="45.5" lengthAdjust="spacingAndGlyphs">73.275</text>
<text x="1944.5" y="633.4" fill="#fff" style="font-family:'Liberation Sans',sans-serif;font-size:15.8px" textLength="45.5" lengthAdjust="spacingAndGlyphs">73.170</text>
<text x="1944.5" y="689.1" fill="#fff" style="font-family:'Liberation Sans',sans-serif;font-size:15.8px" textLength="45.5" lengthAdjust="spacingAndGlyphs">73.065</text>
<text x="1944.5" y="743.8" fill="#fff" style="font-family:'Liberation Sans',sans-serif;font-size:15.8px" textLength="45.5" lengthAdjust="spacingAndGlyphs">72.965</text>
<text x="1944.5" y="799" fill="#fff" style="font-family:'Liberation Sans',sans-serif;font-size:15.8px" textLength="45.5" lengthAdjust="spacingAndGlyphs">72.860</text>
<text x="1944.8" y="550.2" fill="#000" style="font-family:'Liberation Sans',sans-serif;font-size:15.8px" textLength="45.5" lengthAdjust="spacingAndGlyphs">73.329</text>
<text x="1943" y="820.6" fill="#fff" style="font-family:'Liberation Sans',sans-serif;font-size:15.8px" textLength="15.6" lengthAdjust="spacingAndGlyphs">46</text>
<text x="1943" y="879.6" fill="#fff" style="font-family:'Liberation Sans',sans-serif;font-size:15.8px" textLength="15.6" lengthAdjust="spacingAndGlyphs">35</text>
<text x="1943" y="933.6" fill="#fff" style="font-family:'Liberation Sans',sans-serif;font-size:15.8px" textLength="15.6" lengthAdjust="spacingAndGlyphs">24</text>
<text x="1943" y="987.6" fill="#fff" style="font-family:'Liberation Sans',sans-serif;font-size:15.8px" textLength="15.6" lengthAdjust="spacingAndGlyphs">13</text>
<text x="1063" y="149" fill="#fff" style="font-family:'Liberation Sans',sans-serif;font-size:15.8px;white-space:pre" textLength="290" lengthAdjust="spacingAndGlyphs">NZDJPY,H4  73.122 73.379 73.102 73.329</text>
<text x="1045.5" y="823.6" fill="#fff" style="font-family:'Liberation Sans',sans-serif;font-size:15.8px" textLength="295" lengthAdjust="spacingAndGlyphs">ADX(14) 35.3843 +DI:10.1606 -DI:16.6902</text>
</svg>
<div class="a" style="left:0px;top:804px;width:355.2px;height:200px;background:rgba(0,0,0,0.545);border-top-right-radius:47px"></div>
<svg class="a" style="left:30px;top:817px" width="48" height="48" viewBox="0 0 48 48"><circle cx="24" cy="24" r="20.6" fill="#29a9eb"/><path d="M11.5 23.6 L35 14.2 C36.2 13.8 37 14.6 36.6 16 L32.6 34 C32.3 35.4 31.3 35.7 30.2 35 L24 30.4 L21 33.3 C20.5 33.8 20 33.7 19.9 33 L19.4 27.6 L31 17.6 L17 26.2 L11.6 24.6 C10.8 24.3 10.8 23.9 11.5 23.6 Z" fill="#fff"/></svg><svg class="a" style="left:26px;top:872px" width="50" height="50" viewBox="0 0 50 50"><circle cx="25.4" cy="24.6" r="23.3" fill="#f20d0d"/><circle cx="25.4" cy="24.6" r="14.6" fill="none" stroke="#fff" stroke-width="2.4"/><path d="M20.6 17.6 L33 24.6 L20.6 31.6 Z" fill="#fff"/></svg><svg class="a" style="left:26px;top:930px" width="50" height="50" viewBox="0 0 50 50"><circle cx="25.7" cy="24.4" r="22.8" fill="#3f6db4"/><g fill="none" stroke="#fff" stroke-width="1.7"><circle cx="25.7" cy="24.4" r="14.8"/><ellipse cx="25.7" cy="24.4" rx="6.6" ry="14.8"/><path d="M25.7 9.6 V39.2 M10.9 24.4 H40.5 M13 17.2 H38.4 M13 31.6 H38.4"/></g></svg>
<span class="t" style="left:84.7px;top:823.93px;font-size:25.6px;line-height:33px;color:#fff;letter-spacing:-0.39px;font-weight:bold;">RMCHARTS_IR</span>
<span class="t" style="left:84.7px;top:880.03px;font-size:25.6px;line-height:33px;color:#fff;letter-spacing:-0.25px;font-weight:bold;">RMCHARTS</span>
<span class="t" style="left:84.7px;top:938.33px;font-size:25.6px;line-height:33px;color:#fff;letter-spacing:-0.12px;font-weight:bold;">WWW.RMCHARTS.IR</span>
</body></html>
